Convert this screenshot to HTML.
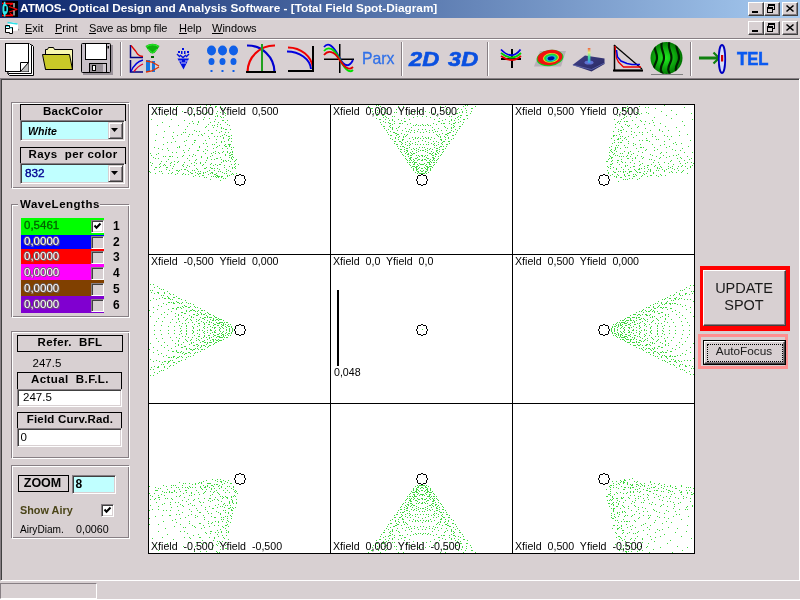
<!DOCTYPE html>
<html><head><meta charset="utf-8"><style>
*{box-sizing:border-box}
body{will-change:transform;margin:0;width:800px;height:600px;overflow:hidden;background:#D8D0D2;position:relative;font-family:"Liberation Sans",sans-serif;font-size:11px;color:#000}
.a{position:absolute}
.t{position:absolute;white-space:pre;line-height:1}
.wb{position:absolute;width:16px;height:14px;background:#D8D0D2;border-top:1px solid #fff;border-left:1px solid #fff;border-right:1px solid #404040;border-bottom:1px solid #404040;box-shadow:inset -1px -1px 0 #877F84}
.etch{position:absolute;border:1px solid #877F84;box-shadow:inset 1px 1px 0 #fff,1px 1px 0 #fff}
.lbl{position:absolute;border:1px solid #000;font-weight:bold;text-align:center}
.sunk{position:absolute;border-top:1px solid #877F84;border-left:1px solid #877F84;border-right:1px solid #fff;border-bottom:1px solid #fff;box-shadow:inset 1px 1px 0 #404040,inset -1px -1px 0 #D8D0D2}
.raise{position:absolute;background:#D8D0D2;border-top:1px solid #fff;border-left:1px solid #fff;border-right:1px solid #404040;border-bottom:1px solid #404040;box-shadow:inset -1px -1px 0 #877F84}
.chk{position:absolute;width:13px;height:13px;border-top:1px solid #877F84;border-left:1px solid #877F84;border-right:1px solid #fff;border-bottom:1px solid #fff;box-shadow:inset 1px 1px 0 #404040,inset -1px -1px 0 #D8D0D2;background:#D8D0D2}
.sep{position:absolute;width:2px;border-left:1px solid #877F84;border-right:1px solid #fff}
</style></head><body>
<!-- title bar -->
<div class="a" style="left:0;top:0;width:800px;height:18px;background:linear-gradient(to right,#0A246A,#A6CAF0)"></div>
<svg class="a" style="left:0;top:0" width="20" height="18" viewBox="0 0 20 18">
<rect x="2" y="1" width="16" height="16" fill="#000"/>
<path d="M2 3.5H13M2 15.5H13" stroke="#F00" stroke-width="1.3"/>
<path d="M9 6.5L17.5 9.5M9 12L17 9.5M10 5L13 3.5M10 13.5L13 15.5" stroke="#F00" stroke-width="1.3"/>
<path d="M14 3V7.5M14 10.5V15.5" stroke="#A8A8A8" stroke-width="1.6"/>
<path d="M3.8 1.8h1.6v2c1.8 1 2.6 2.8 2.6 5.4s-.8 4.4-2.6 5.4v2H3.8v-2C2.6 13.6 2.4 12 2.4 9.2s.2-4.4 1.4-5.4z" fill="#2EE8F0"/>
<rect x="4.4" y="6.2" width="2" height="5" fill="#000"/>
</svg>
<div class="t" style="left:20px;top:3px;font-weight:bold;font-size:11.8px;color:#fff">ATMOS- Optical Design and Analysis Software - [Total Field Spot-Diagram]</div>
<div class="wb" style="left:748px;top:2px"></div>
<div class="wb" style="left:764px;top:2px"></div>
<div class="wb" style="left:782px;top:2px"></div>
<div class="wb" style="left:748px;top:21px"></div>
<div class="wb" style="left:764px;top:21px"></div>
<div class="wb" style="left:782px;top:21px"></div>
<svg class="a" style="left:746px;top:0px" width="54" height="18" viewBox="0 0 54 18">
<rect x="6" y="11" width="6" height="2" fill="#000"/>
<g fill="#000" shape-rendering="crispEdges"><rect x="22" y="4" width="7" height="2"/><rect x="28" y="6" width="1" height="4"/><rect x="27" y="9" width="1" height="1"/><rect x="22" y="6" width="1" height="1"/>
<rect x="21" y="7" width="6" height="2"/><rect x="21" y="9" width="1" height="4"/><rect x="26" y="9" width="1" height="4"/><rect x="21" y="12" width="6" height="1"/></g>
<path d="M40.5 5.5L47.5 11.5M47.5 5.5L40.5 11.5" stroke="#000" stroke-width="1.6"/>
</svg>
<svg class="a" style="left:746px;top:19px" width="54" height="18" viewBox="0 0 54 18">
<rect x="6" y="11" width="6" height="2" fill="#000"/>
<g fill="#000" shape-rendering="crispEdges"><rect x="22" y="4" width="7" height="2"/><rect x="28" y="6" width="1" height="4"/><rect x="27" y="9" width="1" height="1"/><rect x="22" y="6" width="1" height="1"/>
<rect x="21" y="7" width="6" height="2"/><rect x="21" y="9" width="1" height="4"/><rect x="26" y="9" width="1" height="4"/><rect x="21" y="12" width="6" height="1"/></g>
<path d="M40.5 5.5L47.5 11.5M47.5 5.5L40.5 11.5" stroke="#000" stroke-width="1.6"/>
</svg>
<!-- menu -->
<svg class="a" style="left:0;top:18px" width="22" height="20" viewBox="0 0 22 20">
<path d="M8 6L13 4L18 6V12.5L13 13L8 12z" fill="#fff"/>
<path d="M7.5 4.5L17.5 6" stroke="#30E0E8" stroke-width="1.3"/>
<path d="M18 10.5L19.5 12L18 12.5z" fill="#808080"/>
<path d="M5.5 7.5H9.5V9.5H12.5V15.5H9.5V14.5H5.5z" fill="#fff" stroke="#000" stroke-width="1"/>
<path d="M6 8.5H9M9.5 10H12" stroke="#30E0E8" stroke-width="1"/>
<path d="M5.5 10.5H9.5V9.5" fill="none" stroke="#000" stroke-width="1"/>
</svg>
<div class="t" style="left:25px;top:22.5px;font-size:11px">Exit</div>
<div class="t" style="left:55px;top:22.5px;font-size:11px">Print</div>
<div class="t" style="left:89px;top:22.5px;font-size:11px;letter-spacing:-0.2px">Save as bmp file</div>
<div class="t" style="left:179px;top:22.5px;font-size:11px">Help</div>
<div class="t" style="left:212px;top:22.5px;font-size:11px">Windows</div>
<div class="a" style="left:25px;top:33px;width:7px;height:1px;background:#000"></div>
<div class="a" style="left:55px;top:33px;width:7px;height:1px;background:#000"></div>
<div class="a" style="left:89px;top:33px;width:7px;height:1px;background:#000"></div>
<div class="a" style="left:179px;top:33px;width:8px;height:1px;background:#000"></div>
<div class="a" style="left:212px;top:33px;width:11px;height:1px;background:#000"></div>
<div class="a" style="left:0;top:38px;width:800px;height:1px;background:#877F84"></div>
<div class="a" style="left:0;top:39px;width:800px;height:1px;background:#fff"></div>
<svg class="a" style="left:0;top:38px" width="800" height="40" viewBox="0 38 800 40">
<rect x="120" y="42" width="1" height="34" fill="#877F84"/><rect x="121" y="42" width="1" height="34" fill="#fff"/>
<rect x="401" y="42" width="1" height="34" fill="#877F84"/><rect x="402" y="42" width="1" height="34" fill="#fff"/>
<rect x="487" y="42" width="1" height="34" fill="#877F84"/><rect x="488" y="42" width="1" height="34" fill="#fff"/>
<rect x="690" y="42" width="1" height="34" fill="#877F84"/><rect x="691" y="42" width="1" height="34" fill="#fff"/>
<path d="M7.5 72.5V73.5L9.5 75.5H33.5V46.5L31.5 44.5" fill="#fff" stroke="#000"/>
<path d="M7.5 71.5L8.5 73.5H31.5V45.5L29.5 43.5" fill="#fff" stroke="#000"/>
<rect x="5.5" y="43.5" width="23" height="28" fill="#fff" stroke="#000"/>
<path d="M28.5 62.5V71.5H20.5z" fill="#C0C0C0"/>
<path d="M20.5 71.5V62.5H28.5M28.5 62.5L20.5 71.5" fill="none" stroke="#000"/>
<path d="M45.5 54.5V49.5H47.5L48.5 47.5H53.5L54.5 49.5H72.5V69.5H45.5z" fill="#F8F8B0" stroke="#000"/>
<path d="M42.5 54.5H69.5L72.5 69.5H45.5z" fill="#CACA28" stroke="#000"/>
<rect x="83" y="45" width="30" height="30" fill="#9A929A"/>
<rect x="81.5" y="43.5" width="29" height="29" fill="#C8C0C8" stroke="#000" rx="1"/>
<rect x="85.5" y="43.5" width="21" height="16" fill="#fff" stroke="#000"/>
<rect x="107.5" y="46" width="1.5" height="2.5" fill="#000"/>
<rect x="89.5" y="63.5" width="17" height="9" fill="#9A929A" stroke="#000"/>
<rect x="92.5" y="65.5" width="3" height="5" fill="#fff" stroke="#000"/>
<rect x="103" y="64" width="3" height="8" fill="#D0C8D0"/>
<path d="M130.5 45V57.5H143" fill="none" stroke="#000080" stroke-width="1.5"/>
<path d="M131 45.5L135.5 51L137.5 54L140 56L143 56.5" fill="none" stroke="#E00000" stroke-width="1.3"/>
<path d="M130.5 60V72H143" fill="none" stroke="#000080" stroke-width="1.5"/>
<path d="M131 71.5Q135 62 143 60" fill="none" stroke="#0000E0" stroke-width="1.3"/>
<path d="M134 71.5Q138 66 143 64" fill="none" stroke="#E00030" stroke-width="1.3"/>
<path d="M145.5 46Q152.5 41.5 159.5 46L157 50Q152.5 57 148 50z" fill="#10B010"/>
<path d="M146.5 46.5Q152.5 43 158.5 46.5M148 49L152.5 53L157 49" fill="none" stroke="#30FF30" stroke-width="1"/>
<rect x="151" y="56" width="3" height="2" fill="#006000"/>
<rect x="146" y="60" width="4" height="12" fill="#1878E0"/>
<rect x="152" y="61" width="3" height="11" fill="#1878E0"/>
<path d="M146 61L152 62L159 66M146 72L152 71L159 67" fill="none" stroke="#E03000" stroke-width="1.3"/>
<path d="M177.5 58.5H189L183.5 69.5z" fill="#0010E0"/>
<g fill="#0010E0"><rect x="182" y="48" width="2" height="2"/><rect x="178" y="51" width="2" height="2"/><rect x="181" y="51" width="1.5" height="3"/><rect x="184" y="51" width="1.5" height="3"/><rect x="187" y="51" width="2" height="2"/>
<path d="M177 54L180 57M186 57L189 54M180 55L183 57.5L186 55" stroke="#0010E0" stroke-width="1.4" fill="none"/></g>
<path d="M179 61H182M185 61H188M181 63H186" stroke="#C8C8F8" stroke-width="1"/>
<g fill="#1060E8">
<ellipse cx="211.5" cy="50.5" rx="4.5" ry="5"/><ellipse cx="211.5" cy="61.5" rx="3" ry="3.5"/><rect x="210.5" y="70" width="2" height="2"/>
<ellipse cx="222.5" cy="50.5" rx="4.5" ry="5"/><ellipse cx="222.5" cy="61.5" rx="3" ry="3.5"/><rect x="221.5" y="70" width="2" height="2"/>
<ellipse cx="233.5" cy="50.5" rx="4.5" ry="5"/><ellipse cx="233.5" cy="61.5" rx="3" ry="3.5"/><rect x="232.5" y="70" width="2" height="2"/>
</g>
<path d="M247 45.5A27 27 0 0 1 274.5 72" fill="none" stroke="#0000D0" stroke-width="2.2"/>
<path d="M275 45.5A27 27 0 0 0 247.5 72" fill="none" stroke="#F00000" stroke-width="2.2"/>
<rect x="261" y="44" width="2" height="28" fill="#20A020"/>
<rect x="246" y="71" width="30" height="2" fill="#000"/>
<path d="M288 47.5A25 23 0 0 1 313 68" fill="none" stroke="#F00000" stroke-width="2"/>
<path d="M287 51.5A24 19 0 0 1 311 69" fill="none" stroke="#0000E0" stroke-width="2"/>
<rect x="312" y="46" width="2" height="26" fill="#000"/>
<rect x="288" y="70" width="26" height="2" fill="#000"/>
<rect x="339" y="44" width="1.5" height="29" fill="#000"/>
<rect x="324" y="58.5" width="30" height="1.5" fill="#000"/>
<path d="M324 47C328 42 333 45 339 57S350 66 353 60" fill="none" stroke="#0000E0" stroke-width="1.8"/>
<path d="M324 51C328 46 334 48 339 58S349 74 353 70" fill="none" stroke="#00E000" stroke-width="1.8"/>
<path d="M324 55C328 50 334 51 339 59S349 71 353 67" fill="none" stroke="#E00000" stroke-width="1.8"/>
<rect x="511" y="49" width="2" height="19" fill="#000"/>
<rect x="501" y="58" width="20" height="2" fill="#000"/>
<path d="M501 56Q512 64 521 56" fill="none" stroke="#E00000" stroke-width="1.8"/>
<path d="M501 53Q512 62 521 53" fill="none" stroke="#00D000" stroke-width="1.8"/>
<path d="M501 49.5Q512 61 520.5 49.5" fill="none" stroke="#0000E0" stroke-width="1.8"/>
<path d="M534 66.5H561L566 51H540z" fill="#B8B0B8"/>
<ellipse cx="550" cy="58" rx="13.5" ry="8" fill="#10D020" transform="rotate(-8 550 58)"/>
<ellipse cx="550" cy="57.5" rx="12.5" ry="7.5" fill="#F01010" transform="rotate(-8 550 58)"/>
<ellipse cx="551" cy="58" rx="8" ry="4.8" fill="#F0E020" transform="rotate(-8 550 58)"/>
<ellipse cx="551" cy="58" rx="7" ry="4.2" fill="#20D040" transform="rotate(-8 550 58)"/>
<ellipse cx="551" cy="58.5" rx="5" ry="3" fill="#10C0E0" transform="rotate(-8 550 58)"/>
<ellipse cx="551" cy="58.5" rx="3.5" ry="2" fill="#0010A0" transform="rotate(-8 550 58)"/>
<defs><linearGradient id="spk" x1="0" y1="0" x2="0" y2="1"><stop offset="0" stop-color="#F06040"/><stop offset=".3" stop-color="#E0F080"/><stop offset=".6" stop-color="#40E0A0"/><stop offset="1" stop-color="#4090F0"/></linearGradient>
<linearGradient id="bas" x1="0" y1="0" x2="1" y2="1"><stop offset="0" stop-color="#404088"/><stop offset="1" stop-color="#282860"/></linearGradient></defs>
<path d="M572.5 65L585 55.5L604.5 58.5V64L591.5 71.5z" fill="url(#bas)"/>
<path d="M573 65L591.5 69.5L604.5 63" fill="none" stroke="#6068B0" stroke-width="0.8"/>
<ellipse cx="589" cy="62.5" rx="4.5" ry="2" fill="#6070D0"/>
<rect x="587.8" y="48" width="2.6" height="15" fill="url(#spk)"/>

<path d="M614.5 45V70.5H642.5" fill="none" stroke="#000" stroke-width="1.5"/>
<rect x="613" y="69.5" width="30" height="2" fill="#000"/>
<path d="M614 45L642 69" stroke="#000" stroke-width="1.2"/>
<path d="M615 46L616.5 58L618.5 62L623.5 67H641" fill="none" stroke="#F00000" stroke-width="1.3"/>
<path d="M616.5 50L617.5 57L621 61L627 63.5L632 64.5H640" fill="none" stroke="#0000E0" stroke-width="1.5"/>
<defs><clipPath id="sph"><circle cx="666.5" cy="58" r="16"/></clipPath>
<radialGradient id="sg" cx="0.45" cy="0.5" r="0.55"><stop offset="0" stop-color="#20F020"/><stop offset="1" stop-color="#007000"/></radialGradient></defs>
<circle cx="666.5" cy="58" r="16" fill="url(#sg)"/>
<g clip-path="url(#sph)" fill="none" stroke="#002000" stroke-width="2.2">
<path d="M655 42C652 50 660 54 656 62S654 72 657 76"/>
<path d="M662 42C659 50 667 54 663 62S661 72 664 76"/>
<path d="M669.5 42C666.5 50 674.5 54 670.5 62S668.5 72 671.5 76"/>
<path d="M677 42C674 50 682 54 678 62S676 72 679 76"/>
</g>
<rect x="651" y="74" width="32" height="1" fill="#808080"/>
<rect x="699" y="56.5" width="20" height="3" fill="#108010"/>
<path d="M713.5 52.5L719 58L713.5 63.5" fill="none" stroke="#108010" stroke-width="2.2"/>
<ellipse cx="722" cy="59" rx="3.2" ry="14" fill="#D8E0F8" stroke="#0000C0" stroke-width="1.8"/>
<rect x="721" y="55" width="2.2" height="6.5" fill="#D00000"/>
</svg>
<div class="t" style="left:361.5px;top:49.91px;font-size:17px;color:#3070E8;-webkit-text-stroke:0.3px #3070E8;transform:scaleX(.93);transform-origin:left">Parx</div>
<div class="t" style="left:409px;top:48.67px;font-size:20px;color:#0A50E0;font-weight:bold;font-style:italic;-webkit-text-stroke:0.6px #0A50E0;transform:scaleX(1.18);transform-origin:left">2D</div>
<div class="t" style="left:448px;top:48.67px;font-size:20px;color:#0A50E0;font-weight:bold;font-style:italic;-webkit-text-stroke:0.6px #0A50E0;transform:scaleX(1.18);transform-origin:left">3D</div>
<div class="t" style="left:737px;top:48.82px;font-size:19px;color:#0A5AF0;font-weight:bold;-webkit-text-stroke:0.6px #0A5AF0;transform:scaleX(.88);transform-origin:left">TEL</div>
<!-- MDI client border -->
<div class="a" style="left:0;top:78px;width:800px;height:503px;border-top:1px solid #877F84;border-left:1px solid #877F84;border-right:1px solid #fff;border-bottom:1px solid #fff;box-shadow:inset 1px 1px 0 #404040"></div>
<!-- status bar -->
<div class="a" style="left:0;top:583px;width:97px;height:16px;border-top:1px solid #877F84;border-left:1px solid #877F84;border-right:1px solid #fff;border-bottom:1px solid #fff"></div>
<div class="a" style="left:0;top:599px;width:800px;height:1px;background:#fff"></div>
<div class="a" style="left:11px;top:102px;width:118px;height:86px;border:1px solid #877F84"></div>
<div class="a" style="left:12px;top:103px;width:118px;height:86px;border:1px solid #fff"></div>
<div class="a" style="left:11px;top:102px;width:118px;height:86px;border-top:1px solid #877F84;border-left:1px solid #877F84"></div>
<div class="a" style="left:20px;top:104px;width:106px;height:17px;border:1px solid #000"></div>
<div class="t" style="left:-27.0px;width:200px;text-align:center;top:106.27px;font-size:11.5px;font-weight:bold;letter-spacing:0.3px">BackColor</div>
<div class="a" style="left:20px;top:120px;width:105px;height:21px;background:#C0FFFF;border-top:1px solid #877F84;border-left:1px solid #877F84;border-right:1px solid #fff;border-bottom:1px solid #fff;box-shadow:inset 1px 1px 0 #404040,inset -1px -1px 0 #D8D0D2"></div>
<div class="a" style="left:108px;top:122px;width:15px;height:17px;background:#D8D0D2;border-top:1px solid #D8D0D2;border-left:1px solid #D8D0D2;border-right:1px solid #404040;border-bottom:1px solid #404040;box-shadow:inset 1px 1px 0 #fff,inset -1px -1px 0 #877F84"></div>
<svg class="a" style="left:111px;top:128px" width="7" height="4"><path d="M0 0h7l-3.5 4z" fill="#000"/></svg>
<div class="t" style="left:28px;top:126.27px;font-size:11.5px;font-weight:bold;font-style:italic;transform:scaleX(.92);transform-origin:left">White</div>
<div class="a" style="left:20px;top:147px;width:106px;height:17px;border:1px solid #000"></div>
<div class="t" style="left:-27.0px;width:200px;text-align:center;top:149.27px;font-size:11.5px;font-weight:bold;letter-spacing:0.4px">Rays  per color</div>
<div class="a" style="left:20px;top:163px;width:105px;height:21px;background:#C0FFFF;border-top:1px solid #877F84;border-left:1px solid #877F84;border-right:1px solid #fff;border-bottom:1px solid #fff;box-shadow:inset 1px 1px 0 #404040,inset -1px -1px 0 #D8D0D2"></div>
<div class="a" style="left:108px;top:165px;width:15px;height:17px;background:#D8D0D2;border-top:1px solid #D8D0D2;border-left:1px solid #D8D0D2;border-right:1px solid #404040;border-bottom:1px solid #404040;box-shadow:inset 1px 1px 0 #fff,inset -1px -1px 0 #877F84"></div>
<svg class="a" style="left:111px;top:171px" width="7" height="4"><path d="M0 0h7l-3.5 4z" fill="#000"/></svg>
<div class="t" style="left:25px;top:168.01px;font-size:11.8px;color:#000090;-webkit-text-stroke:0.35px #000090">832</div>
<div class="a" style="left:11px;top:204px;width:118px;height:113px;border:1px solid #877F84"></div>
<div class="a" style="left:12px;top:205px;width:118px;height:113px;border:1px solid #fff"></div>
<div class="a" style="left:11px;top:204px;width:118px;height:113px;border-top:1px solid #877F84;border-left:1px solid #877F84"></div>
<div class="a" style="left:18px;top:203px;width:82px;height:4px;background:#D8D0D2"></div>
<div class="t" style="left:20px;top:198.77px;font-size:11.5px;font-weight:bold;letter-spacing:0.5px">WaveLengths</div>
<div class="a" style="left:21px;top:218px;width:83px;height:17px;background:#00FF00"></div>
<div class="t" style="left:24px;top:219.77px;font-size:11.5px;color:#006000;-webkit-text-stroke:0.3px #006000">0,5461</div>
<div class="a" style="left:91px;top:220px;width:13px;height:13px;background:#fff;border-top:1px solid #877F84;border-left:1px solid #877F84;border-right:1px solid #fff;border-bottom:1px solid #fff;box-shadow:inset 1px 1px 0 #404040,inset -1px -1px 0 #D8D0D2"></div>
<div class="t" style="left:113px;top:220.34px;font-size:12px;font-weight:bold;">1</div>
<div class="a" style="left:21px;top:235px;width:83px;height:14px;background:#0000FF"></div>
<div class="t" style="left:24px;top:235.77px;font-size:11.5px;color:#fff;text-shadow:1px 1px 0 #6a6468,-1px 0 0 #6a6468,0 -1px 0 #6a6468">0,0000</div>
<div class="a" style="left:91px;top:236px;width:13px;height:13px;background:#D8D0D2;border-top:1px solid #877F84;border-left:1px solid #877F84;border-right:1px solid #fff;border-bottom:1px solid #fff;box-shadow:inset 1px 1px 0 #404040,inset -1px -1px 0 #D8D0D2"></div>
<div class="t" style="left:113px;top:236.34px;font-size:12px;font-weight:bold;">2</div>
<div class="a" style="left:21px;top:249px;width:83px;height:15px;background:#FF0000"></div>
<div class="t" style="left:24px;top:250.77px;font-size:11.5px;color:#fff;text-shadow:1px 1px 0 #6a6468,-1px 0 0 #6a6468,0 -1px 0 #6a6468">0,0000</div>
<div class="a" style="left:91px;top:251px;width:13px;height:13px;background:#D8D0D2;border-top:1px solid #877F84;border-left:1px solid #877F84;border-right:1px solid #fff;border-bottom:1px solid #fff;box-shadow:inset 1px 1px 0 #404040,inset -1px -1px 0 #D8D0D2"></div>
<div class="t" style="left:113px;top:251.34px;font-size:12px;font-weight:bold;">3</div>
<div class="a" style="left:21px;top:264px;width:83px;height:16px;background:#FF00FF"></div>
<div class="t" style="left:24px;top:266.77px;font-size:11.5px;color:#fff;text-shadow:1px 1px 0 #6a6468,-1px 0 0 #6a6468,0 -1px 0 #6a6468">0,0000</div>
<div class="a" style="left:91px;top:267px;width:13px;height:13px;background:#D8D0D2;border-top:1px solid #877F84;border-left:1px solid #877F84;border-right:1px solid #fff;border-bottom:1px solid #fff;box-shadow:inset 1px 1px 0 #404040,inset -1px -1px 0 #D8D0D2"></div>
<div class="t" style="left:113px;top:267.34px;font-size:12px;font-weight:bold;">4</div>
<div class="a" style="left:21px;top:280px;width:83px;height:16px;background:#804000"></div>
<div class="t" style="left:24px;top:282.77px;font-size:11.5px;color:#fff;text-shadow:1px 1px 0 #6a6468,-1px 0 0 #6a6468,0 -1px 0 #6a6468">0,0000</div>
<div class="a" style="left:91px;top:283px;width:13px;height:13px;background:#D8D0D2;border-top:1px solid #877F84;border-left:1px solid #877F84;border-right:1px solid #fff;border-bottom:1px solid #fff;box-shadow:inset 1px 1px 0 #404040,inset -1px -1px 0 #D8D0D2"></div>
<div class="t" style="left:113px;top:283.34px;font-size:12px;font-weight:bold;">5</div>
<div class="a" style="left:21px;top:296px;width:83px;height:17px;background:#8000D0"></div>
<div class="t" style="left:24px;top:298.77px;font-size:11.5px;color:#fff;text-shadow:1px 1px 0 #6a6468,-1px 0 0 #6a6468,0 -1px 0 #6a6468">0,0000</div>
<div class="a" style="left:91px;top:299px;width:13px;height:13px;background:#D8D0D2;border-top:1px solid #877F84;border-left:1px solid #877F84;border-right:1px solid #fff;border-bottom:1px solid #fff;box-shadow:inset 1px 1px 0 #404040,inset -1px -1px 0 #D8D0D2"></div>
<div class="t" style="left:113px;top:299.34px;font-size:12px;font-weight:bold;">6</div>
<svg class="a" style="left:93px;top:222px" width="9" height="9"><path d="M1.5 3.5l2 2.2 4-4.2" fill="none" stroke="#000" stroke-width="2"/></svg>
<div class="a" style="left:11px;top:331px;width:118px;height:127px;border:1px solid #877F84"></div>
<div class="a" style="left:12px;top:332px;width:118px;height:127px;border:1px solid #fff"></div>
<div class="a" style="left:11px;top:331px;width:118px;height:127px;border-top:1px solid #877F84;border-left:1px solid #877F84"></div>
<div class="a" style="left:17px;top:335px;width:106px;height:17px;border:1px solid #000"></div>
<div class="t" style="left:-30.0px;width:200px;text-align:center;top:336.77px;font-size:11.5px;font-weight:bold;letter-spacing:0.4px">Refer.  BFL</div>
<div class="t" style="left:32.5px;top:357.77px;font-size:11.5px;">247.5</div>
<div class="a" style="left:17px;top:372px;width:105px;height:18px;border:1px solid #000"></div>
<div class="t" style="left:-30.0px;width:200px;text-align:center;top:374.27px;font-size:11.5px;font-weight:bold;letter-spacing:0.4px">Actual  B.F.L.</div>
<div class="a" style="left:17px;top:389px;width:105px;height:18px;background:#fff;border-top:1px solid #877F84;border-left:1px solid #877F84;border-right:1px solid #fff;border-bottom:1px solid #fff;box-shadow:inset 1px 1px 0 #404040,inset -1px -1px 0 #D8D0D2"></div>
<div class="t" style="left:23px;top:391.77px;font-size:11.5px;">247.5</div>
<div class="a" style="left:17px;top:412px;width:105px;height:18px;border:1px solid #000"></div>
<div class="t" style="left:-30.0px;width:200px;text-align:center;top:413.77px;font-size:11.5px;font-weight:bold;letter-spacing:0.2px">Field Curv.Rad.</div>
<div class="a" style="left:17px;top:428px;width:105px;height:19px;background:#fff;border-top:1px solid #877F84;border-left:1px solid #877F84;border-right:1px solid #fff;border-bottom:1px solid #fff;box-shadow:inset 1px 1px 0 #404040,inset -1px -1px 0 #D8D0D2"></div>
<div class="t" style="left:20.5px;top:432.27px;font-size:11.5px;">0</div>
<div class="a" style="left:11px;top:465px;width:118px;height:73px;border:1px solid #877F84"></div>
<div class="a" style="left:12px;top:466px;width:118px;height:73px;border:1px solid #fff"></div>
<div class="a" style="left:11px;top:465px;width:118px;height:73px;border-top:1px solid #877F84;border-left:1px solid #877F84"></div>
<div class="a" style="left:18px;top:475px;width:51px;height:17px;border:1px solid #000"></div>
<div class="t" style="left:-57.5px;width:200px;text-align:center;top:477.42px;font-size:12.5px;font-weight:bold;">ZOOM</div>
<div class="a" style="left:72px;top:475px;width:44px;height:19px;background:#C0FFFF;border-top:1px solid #877F84;border-left:1px solid #877F84;border-right:1px solid #fff;border-bottom:1px solid #fff;box-shadow:inset 1px 1px 0 #404040,inset -1px -1px 0 #D8D0D2"></div>
<div class="t" style="left:75.5px;top:478.34px;font-size:12px;font-weight:bold;">8</div>
<div class="t" style="left:20px;top:505.01px;font-size:11.8px;font-weight:bold;color:#4A4418;transform:scaleX(.92);transform-origin:left">Show Airy</div>
<div class="a" style="left:101px;top:504px;width:13px;height:13px;background:#fff;border-top:1px solid #877F84;border-left:1px solid #877F84;border-right:1px solid #fff;border-bottom:1px solid #fff;box-shadow:inset 1px 1px 0 #404040,inset -1px -1px 0 #D8D0D2"></div>
<svg class="a" style="left:103px;top:506px" width="9" height="9"><path d="M1.5 3.5l2 2.2 4-4.2" fill="none" stroke="#000" stroke-width="2"/></svg>
<div class="t" style="left:20px;top:524.27px;font-size:11.5px;transform:scaleX(.88);transform-origin:left">AiryDiam.</div>
<div class="t" style="left:76px;top:524.27px;font-size:11.5px;transform:scaleX(.93);transform-origin:left">0,0060</div>
<svg class="a" style="left:148px;top:104px" width="547" height="450" viewBox="0 0 547 450" shape-rendering="crispEdges"><rect x="0" y="0" width="547" height="450" fill="#fff"/><path fill="#40D840" d="M67 226h1v1h-1zM67 228h1v1h-1zM69 230h1v1h-1zM71 232h1v1h-1zM74 233h1v1h-1zM76 233h1v1h-1zM79 233h1v1h-1zM82 231h1v1h-1zM83 229h1v1h-1zM84 227h1v1h-1zM84 225h1v1h-1zM83 223h1v1h-1zM81 222h1v1h-1zM79 221h1v1h-1zM77 220h1v1h-1zM75 221h1v1h-1zM73 222h1v1h-1zM72 224h1v1h-1zM71 226h1v1h-1zM72 227h1v1h-1zM73 229h1v1h-1zM75 230h1v1h-1zM77 231h1v1h-1zM79 230h1v1h-1zM81 229h1v1h-1zM83 228h1v1h-1zM84 226h1v1h-1zM84 224h1v1h-1zM83 222h1v1h-1zM82 220h1v1h-1zM79 218h1v1h-1zM76 218h1v1h-1zM74 218h1v1h-1zM71 219h1v1h-1zM69 221h1v1h-1zM67 223h1v1h-1zM59 226h1v1h-1zM59 228h1v1h-1zM60 231h1v1h-1zM63 233h1v1h-1zM65 235h1v1h-1zM69 236h1v1h-1zM72 236h1v1h-1zM75 235h1v1h-1zM78 233h1v1h-1zM80 231h1v1h-1zM81 226h1v1h-1zM81 224h1v1h-1zM80 222h1v1h-1zM75 219h1v1h-1zM72 218h1v1h-1zM69 219h1v1h-1zM67 220h1v1h-1zM65 221h1v1h-1zM64 223h1v1h-1zM63 226h1v1h-1zM64 228h1v1h-1zM65 230h1v1h-1zM67 231h1v1h-1zM69 232h1v1h-1zM72 233h1v1h-1zM75 232h1v1h-1zM80 229h1v1h-1zM81 227h1v1h-1zM81 225h1v1h-1zM80 220h1v1h-1zM78 218h1v1h-1zM75 216h1v1h-1zM72 215h1v1h-1zM69 215h1v1h-1zM65 216h1v1h-1zM63 218h1v1h-1zM60 220h1v1h-1zM59 223h1v1h-1zM49 226h1v1h-1zM49 229h1v1h-1zM51 232h1v1h-1zM53 234h1v1h-1zM56 236h1v1h-1zM59 238h1v1h-1zM63 238h1v1h-1zM67 238h1v1h-1zM70 237h1v1h-1zM73 236h1v1h-1zM78 228h1v1h-1zM78 225h1v1h-1zM77 222h1v1h-1zM75 220h1v1h-1zM73 218h1v1h-1zM70 216h1v1h-1zM67 216h1v1h-1zM64 216h1v1h-1zM61 217h1v1h-1zM58 218h1v1h-1zM56 220h1v1h-1zM55 223h1v1h-1zM54 226h1v1h-1zM55 228h1v1h-1zM56 231h1v1h-1zM58 233h1v1h-1zM61 234h1v1h-1zM64 235h1v1h-1zM67 235h1v1h-1zM70 235h1v1h-1zM73 233h1v1h-1zM75 231h1v1h-1zM77 229h1v1h-1zM78 226h1v1h-1zM78 223h1v1h-1zM73 215h1v1h-1zM70 214h1v1h-1zM67 213h1v1h-1zM63 213h1v1h-1zM59 213h1v1h-1zM56 215h1v1h-1zM53 217h1v1h-1zM51 219h1v1h-1zM49 222h1v1h-1zM38 226h1v1h-1zM38 229h1v1h-1zM40 233h1v1h-1zM42 236h1v1h-1zM45 238h1v1h-1zM49 240h1v1h-1zM53 241h1v1h-1zM57 242h1v1h-1zM61 241h1v1h-1zM65 240h1v1h-1zM68 238h1v1h-1zM71 236h1v1h-1zM74 230h1v1h-1zM75 227h1v1h-1zM74 223h1v1h-1zM73 220h1v1h-1zM71 218h1v1h-1zM68 215h1v1h-1zM65 214h1v1h-1zM61 213h1v1h-1zM57 213h1v1h-1zM54 214h1v1h-1zM51 215h1v1h-1zM48 217h1v1h-1zM46 220h1v1h-1zM45 223h1v1h-1zM44 226h1v1h-1zM45 228h1v1h-1zM46 231h1v1h-1zM48 234h1v1h-1zM51 236h1v1h-1zM54 237h1v1h-1zM57 238h1v1h-1zM61 238h1v1h-1zM65 237h1v1h-1zM68 236h1v1h-1zM71 233h1v1h-1zM73 231h1v1h-1zM74 228h1v1h-1zM75 224h1v1h-1zM74 221h1v1h-1zM71 215h1v1h-1zM68 213h1v1h-1zM65 211h1v1h-1zM61 210h1v1h-1zM57 209h1v1h-1zM53 210h1v1h-1zM49 211h1v1h-1zM45 213h1v1h-1zM42 215h1v1h-1zM40 218h1v1h-1zM38 222h1v1h-1zM26 226h1v1h-1zM26 229h1v1h-1zM28 233h1v1h-1zM30 237h1v1h-1zM33 240h1v1h-1zM37 242h1v1h-1zM41 244h1v1h-1zM45 245h1v1h-1zM50 245h1v1h-1zM54 245h1v1h-1zM59 243h1v1h-1zM62 241h1v1h-1zM66 239h1v1h-1zM70 232h1v1h-1zM71 229h1v1h-1zM71 225h1v1h-1zM70 221h1v1h-1zM68 218h1v1h-1zM65 215h1v1h-1zM62 213h1v1h-1zM58 211h1v1h-1zM55 210h1v1h-1zM50 210h1v1h-1zM46 210h1v1h-1zM43 212h1v1h-1zM39 214h1v1h-1zM37 216h1v1h-1zM34 219h1v1h-1zM33 222h1v1h-1zM33 226h1v1h-1zM33 229h1v1h-1zM34 232h1v1h-1zM37 235h1v1h-1zM39 237h1v1h-1zM43 239h1v1h-1zM46 241h1v1h-1zM50 241h1v1h-1zM55 241h1v1h-1zM58 240h1v1h-1zM62 238h1v1h-1zM65 236h1v1h-1zM68 233h1v1h-1zM70 230h1v1h-1zM71 223h1v1h-1zM70 219h1v1h-1zM66 212h1v1h-1zM62 210h1v1h-1zM59 208h1v1h-1zM54 206h1v1h-1zM50 206h1v1h-1zM45 206h1v1h-1zM41 207h1v1h-1zM37 209h1v1h-1zM33 211h1v1h-1zM30 214h1v1h-1zM28 218h1v1h-1zM26 222h1v1h-1zM12 226h1v1h-1zM13 230h1v1h-1zM14 234h1v1h-1zM16 238h1v1h-1zM19 241h1v1h-1zM23 244h1v1h-1zM28 247h1v1h-1zM32 248h1v1h-1zM37 249h1v1h-1zM42 249h1v1h-1zM47 248h1v1h-1zM52 247h1v1h-1zM56 245h1v1h-1zM60 242h1v1h-1zM66 231h1v1h-1zM66 227h1v1h-1zM66 223h1v1h-1zM65 219h1v1h-1zM62 215h1v1h-1zM59 212h1v1h-1zM56 210h1v1h-1zM52 208h1v1h-1zM47 207h1v1h-1zM43 206h1v1h-1zM38 207h1v1h-1zM34 208h1v1h-1zM30 210h1v1h-1zM27 212h1v1h-1zM24 215h1v1h-1zM22 218h1v1h-1zM20 222h1v1h-1zM20 226h1v1h-1zM20 229h1v1h-1zM22 233h1v1h-1zM24 236h1v1h-1zM27 239h1v1h-1zM30 241h1v1h-1zM34 243h1v1h-1zM38 244h1v1h-1zM43 245h1v1h-1zM47 244h1v1h-1zM52 243h1v1h-1zM56 241h1v1h-1zM59 239h1v1h-1zM62 236h1v1h-1zM65 232h1v1h-1zM66 228h1v1h-1zM66 224h1v1h-1zM66 220h1v1h-1zM60 209h1v1h-1zM56 206h1v1h-1zM52 204h1v1h-1zM47 203h1v1h-1zM42 202h1v1h-1zM37 202h1v1h-1zM32 203h1v1h-1zM28 204h1v1h-1zM23 207h1v1h-1zM19 210h1v1h-1zM16 213h1v1h-1zM14 217h1v1h-1zM13 221h1v1h-1zM2 239h1v1h-1zM5 243h1v1h-1zM9 246h1v1h-1zM13 249h1v1h-1zM18 251h1v1h-1zM23 253h1v1h-1zM29 253h1v1h-1zM34 253h1v1h-1zM40 252h1v1h-1zM45 251h1v1h-1zM49 248h1v1h-1zM53 245h1v1h-1zM61 233h1v1h-1zM62 229h1v1h-1zM62 225h1v1h-1zM61 220h1v1h-1zM59 216h1v1h-1zM56 213h1v1h-1zM53 209h1v1h-1zM49 207h1v1h-1zM44 205h1v1h-1zM40 203h1v1h-1zM35 203h1v1h-1zM30 203h1v1h-1zM25 204h1v1h-1zM20 205h1v1h-1zM16 208h1v1h-1zM13 210h1v1h-1zM10 214h1v1h-1zM8 217h1v1h-1zM6 221h1v1h-1zM6 226h1v1h-1zM6 230h1v1h-1zM8 234h1v1h-1zM10 237h1v1h-1zM13 241h1v1h-1zM16 243h1v1h-1zM20 246h1v1h-1zM25 247h1v1h-1zM30 248h1v1h-1zM35 248h1v1h-1zM40 248h1v1h-1zM44 246h1v1h-1zM49 244h1v1h-1zM53 242h1v1h-1zM56 238h1v1h-1zM59 235h1v1h-1zM61 231h1v1h-1zM62 226h1v1h-1zM62 222h1v1h-1zM61 218h1v1h-1zM53 206h1v1h-1zM49 203h1v1h-1zM45 200h1v1h-1zM40 199h1v1h-1zM34 198h1v1h-1zM29 198h1v1h-1zM23 198h1v1h-1zM18 200h1v1h-1zM13 202h1v1h-1zM9 205h1v1h-1zM5 208h1v1h-1zM2 212h1v1h-1zM2 255h1v1h-1zM8 256h1v1h-1zM14 258h1v1h-1zM20 258h1v1h-1zM25 258h1v1h-1zM31 257h1v1h-1zM37 255h1v1h-1zM42 252h1v1h-1zM46 249h1v1h-1zM55 237h1v1h-1zM56 232h1v1h-1zM56 227h1v1h-1zM56 222h1v1h-1zM55 218h1v1h-1zM52 213h1v1h-1zM49 209h1v1h-1zM41 203h1v1h-1zM36 201h1v1h-1zM31 199h1v1h-1zM26 199h1v1h-1zM21 198h1v1h-1zM15 199h1v1h-1zM10 201h1v1h-1zM5 203h1v1h-1zM1 206h1v1h-1zM1 245h1v1h-1zM5 248h1v1h-1zM10 250h1v1h-1zM15 252h1v1h-1zM21 253h1v1h-1zM26 252h1v1h-1zM31 252h1v1h-1zM36 250h1v1h-1zM41 248h1v1h-1zM49 242h1v1h-1zM52 238h1v1h-1zM55 233h1v1h-1zM56 229h1v1h-1zM56 224h1v1h-1zM56 219h1v1h-1zM55 214h1v1h-1zM46 202h1v1h-1zM42 199h1v1h-1zM37 196h1v1h-1zM31 194h1v1h-1zM25 193h1v1h-1zM20 193h1v1h-1zM14 193h1v1h-1zM8 195h1v1h-1zM2 196h1v1h-1zM3 263h1v1h-1zM10 263h1v1h-1zM16 263h1v1h-1zM22 261h1v1h-1zM28 259h1v1h-1zM33 256h1v1h-1zM38 253h1v1h-1zM46 245h1v1h-1zM48 240h1v1h-1zM50 235h1v1h-1zM51 230h1v1h-1zM51 225h1v1h-1zM50 219h1v1h-1zM48 215h1v1h-1zM45 210h1v1h-1zM42 206h1v1h-1zM38 202h1v1h-1zM33 199h1v1h-1zM28 197h1v1h-1zM22 195h1v1h-1zM17 194h1v1h-1zM11 194h1v1h-1zM5 194h1v1h-1zM5 257h1v1h-1zM11 257h1v1h-1zM17 257h1v1h-1zM22 256h1v1h-1zM28 254h1v1h-1zM33 252h1v1h-1zM38 249h1v1h-1zM42 245h1v1h-1zM45 241h1v1h-1zM48 236h1v1h-1zM50 232h1v1h-1zM51 226h1v1h-1zM51 221h1v1h-1zM50 216h1v1h-1zM48 211h1v1h-1zM46 206h1v1h-1zM38 198h1v1h-1zM33 195h1v1h-1zM28 192h1v1h-1zM22 190h1v1h-1zM16 188h1v1h-1zM10 188h1v1h-1zM3 188h1v1h-1zM6 268h1v1h-1zM13 266h1v1h-1zM19 264h1v1h-1zM25 261h1v1h-1zM30 257h1v1h-1zM43 238h1v1h-1zM44 233h1v1h-1zM45 227h1v1h-1zM44 222h1v1h-1zM43 216h1v1h-1zM41 211h1v1h-1zM38 206h1v1h-1zM34 202h1v1h-1zM24 195h1v1h-1zM19 192h1v1h-1zM13 191h1v1h-1zM6 189h1v1h-1zM6 262h1v1h-1zM13 260h1v1h-1zM19 259h1v1h-1zM24 256h1v1h-1zM34 249h1v1h-1zM38 245h1v1h-1zM41 240h1v1h-1zM43 235h1v1h-1zM44 229h1v1h-1zM45 224h1v1h-1zM44 218h1v1h-1zM43 213h1v1h-1zM30 194h1v1h-1zM25 190h1v1h-1zM19 187h1v1h-1zM13 185h1v1h-1zM6 183h1v1h-1zM2 271h1v1h-1zM9 269h1v1h-1zM15 266h1v1h-1zM21 262h1v1h-1zM26 258h1v1h-1zM30 253h1v1h-1zM33 247h1v1h-1zM36 242h1v1h-1zM38 236h1v1h-1zM38 230h1v1h-1zM38 224h1v1h-1zM37 219h1v1h-1zM35 213h1v1h-1zM33 208h1v1h-1zM29 203h1v1h-1zM25 198h1v1h-1zM20 194h1v1h-1zM15 191h1v1h-1zM9 188h1v1h-1zM2 186h1v1h-1zM2 265h1v1h-1zM9 263h1v1h-1zM15 260h1v1h-1zM20 257h1v1h-1zM25 253h1v1h-1zM29 248h1v1h-1zM33 243h1v1h-1zM35 238h1v1h-1zM37 232h1v1h-1zM38 227h1v1h-1zM38 221h1v1h-1zM38 215h1v1h-1zM36 209h1v1h-1zM33 204h1v1h-1zM30 198h1v1h-1zM26 193h1v1h-1zM21 189h1v1h-1zM15 185h1v1h-1zM9 182h1v1h-1zM2 180h1v1h-1zM5 271h1v1h-1zM11 267h1v1h-1zM16 262h1v1h-1zM21 257h1v1h-1zM25 252h1v1h-1zM28 246h1v1h-1zM30 240h1v1h-1zM31 234h1v1h-1zM32 227h1v1h-1zM31 221h1v1h-1zM30 215h1v1h-1zM27 209h1v1h-1zM24 204h1v1h-1zM20 198h1v1h-1zM16 194h1v1h-1zM10 189h1v1h-1zM4 186h1v1h-1zM5 265h1v1h-1zM10 262h1v1h-1zM16 257h1v1h-1zM20 253h1v1h-1zM24 247h1v1h-1zM27 242h1v1h-1zM30 236h1v1h-1zM31 230h1v1h-1zM32 224h1v1h-1zM31 217h1v1h-1zM30 211h1v1h-1zM28 205h1v1h-1zM25 199h1v1h-1zM21 194h1v1h-1zM16 189h1v1h-1zM11 184h1v1h-1zM5 180h1v1h-1zM480 226h1v1h-1zM480 223h1v1h-1zM478 221h1v1h-1zM476 219h1v1h-1zM473 218h1v1h-1zM471 218h1v1h-1zM468 219h1v1h-1zM465 220h1v1h-1zM464 222h1v1h-1zM463 224h1v1h-1zM463 226h1v1h-1zM464 228h1v1h-1zM466 229h1v1h-1zM468 230h1v1h-1zM470 230h1v1h-1zM472 230h1v1h-1zM474 229h1v1h-1zM475 227h1v1h-1zM476 226h1v1h-1zM475 224h1v1h-1zM474 222h1v1h-1zM472 221h1v1h-1zM470 221h1v1h-1zM468 221h1v1h-1zM466 222h1v1h-1zM464 223h1v1h-1zM463 225h1v1h-1zM463 227h1v1h-1zM464 229h1v1h-1zM465 231h1v1h-1zM468 232h1v1h-1zM471 233h1v1h-1zM473 233h1v1h-1zM476 232h1v1h-1zM478 230h1v1h-1zM480 228h1v1h-1zM488 226h1v1h-1zM488 223h1v1h-1zM487 220h1v1h-1zM484 218h1v1h-1zM482 216h1v1h-1zM478 216h1v1h-1zM475 216h1v1h-1zM472 216h1v1h-1zM469 218h1v1h-1zM467 220h1v1h-1zM466 225h1v1h-1zM466 227h1v1h-1zM467 229h1v1h-1zM470 231h1v1h-1zM472 232h1v1h-1zM475 233h1v1h-1zM478 232h1v1h-1zM480 231h1v1h-1zM482 230h1v1h-1zM483 228h1v1h-1zM484 226h1v1h-1zM483 223h1v1h-1zM482 221h1v1h-1zM480 220h1v1h-1zM478 219h1v1h-1zM475 218h1v1h-1zM472 219h1v1h-1zM470 220h1v1h-1zM467 222h1v1h-1zM466 224h1v1h-1zM466 226h1v1h-1zM467 231h1v1h-1zM469 233h1v1h-1zM472 235h1v1h-1zM475 235h1v1h-1zM478 235h1v1h-1zM482 235h1v1h-1zM484 233h1v1h-1zM487 231h1v1h-1zM488 228h1v1h-1zM498 226h1v1h-1zM498 222h1v1h-1zM496 219h1v1h-1zM494 217h1v1h-1zM491 215h1v1h-1zM488 213h1v1h-1zM484 213h1v1h-1zM480 213h1v1h-1zM477 214h1v1h-1zM474 216h1v1h-1zM469 223h1v1h-1zM469 226h1v1h-1zM470 229h1v1h-1zM472 231h1v1h-1zM474 233h1v1h-1zM477 234h1v1h-1zM480 235h1v1h-1zM483 235h1v1h-1zM486 234h1v1h-1zM489 232h1v1h-1zM491 230h1v1h-1zM492 228h1v1h-1zM493 226h1v1h-1zM492 223h1v1h-1zM491 221h1v1h-1zM489 219h1v1h-1zM486 217h1v1h-1zM483 216h1v1h-1zM480 216h1v1h-1zM477 217h1v1h-1zM474 218h1v1h-1zM472 220h1v1h-1zM470 222h1v1h-1zM469 225h1v1h-1zM469 228h1v1h-1zM474 235h1v1h-1zM477 237h1v1h-1zM480 238h1v1h-1zM484 238h1v1h-1zM488 238h1v1h-1zM491 236h1v1h-1zM494 234h1v1h-1zM496 232h1v1h-1zM498 229h1v1h-1zM509 226h1v1h-1zM509 222h1v1h-1zM507 219h1v1h-1zM505 216h1v1h-1zM502 213h1v1h-1zM498 211h1v1h-1zM494 210h1v1h-1zM490 210h1v1h-1zM486 210h1v1h-1zM482 211h1v1h-1zM479 213h1v1h-1zM476 215h1v1h-1zM473 221h1v1h-1zM472 224h1v1h-1zM473 228h1v1h-1zM474 231h1v1h-1zM476 233h1v1h-1zM479 235h1v1h-1zM482 237h1v1h-1zM486 238h1v1h-1zM490 238h1v1h-1zM493 237h1v1h-1zM496 236h1v1h-1zM499 234h1v1h-1zM501 231h1v1h-1zM502 228h1v1h-1zM503 226h1v1h-1zM502 223h1v1h-1zM501 220h1v1h-1zM499 217h1v1h-1zM496 215h1v1h-1zM493 214h1v1h-1zM490 213h1v1h-1zM486 213h1v1h-1zM482 214h1v1h-1zM479 216h1v1h-1zM476 218h1v1h-1zM474 220h1v1h-1zM473 223h1v1h-1zM472 227h1v1h-1zM473 230h1v1h-1zM476 236h1v1h-1zM479 238h1v1h-1zM482 240h1v1h-1zM486 241h1v1h-1zM490 241h1v1h-1zM494 241h1v1h-1zM498 240h1v1h-1zM502 238h1v1h-1zM505 235h1v1h-1zM507 232h1v1h-1zM509 229h1v1h-1zM521 226h1v1h-1zM521 222h1v1h-1zM519 218h1v1h-1zM517 214h1v1h-1zM514 212h1v1h-1zM510 209h1v1h-1zM506 207h1v1h-1zM502 206h1v1h-1zM497 206h1v1h-1zM493 207h1v1h-1zM488 208h1v1h-1zM485 210h1v1h-1zM481 213h1v1h-1zM477 219h1v1h-1zM476 223h1v1h-1zM477 230h1v1h-1zM479 233h1v1h-1zM482 236h1v1h-1zM485 238h1v1h-1zM489 240h1v1h-1zM492 240h1v1h-1zM497 241h1v1h-1zM501 240h1v1h-1zM504 239h1v1h-1zM508 237h1v1h-1zM510 235h1v1h-1zM513 232h1v1h-1zM514 229h1v1h-1zM514 226h1v1h-1zM514 222h1v1h-1zM513 219h1v1h-1zM510 216h1v1h-1zM508 214h1v1h-1zM504 212h1v1h-1zM501 211h1v1h-1zM497 210h1v1h-1zM492 211h1v1h-1zM489 211h1v1h-1zM485 213h1v1h-1zM482 215h1v1h-1zM479 218h1v1h-1zM477 221h1v1h-1zM476 225h1v1h-1zM476 228h1v1h-1zM477 232h1v1h-1zM481 238h1v1h-1zM485 241h1v1h-1zM488 243h1v1h-1zM493 244h1v1h-1zM497 245h1v1h-1zM502 245h1v1h-1zM506 244h1v1h-1zM510 242h1v1h-1zM514 239h1v1h-1zM517 237h1v1h-1zM519 233h1v1h-1zM521 229h1v1h-1zM535 226h1v1h-1zM534 221h1v1h-1zM533 217h1v1h-1zM531 213h1v1h-1zM528 210h1v1h-1zM524 207h1v1h-1zM519 205h1v1h-1zM515 203h1v1h-1zM510 202h1v1h-1zM505 202h1v1h-1zM500 203h1v1h-1zM495 205h1v1h-1zM491 207h1v1h-1zM487 210h1v1h-1zM481 220h1v1h-1zM481 224h1v1h-1zM481 228h1v1h-1zM482 232h1v1h-1zM485 235h1v1h-1zM491 241h1v1h-1zM495 243h1v1h-1zM500 244h1v1h-1zM504 244h1v1h-1zM509 244h1v1h-1zM513 243h1v1h-1zM517 241h1v1h-1zM520 239h1v1h-1zM523 236h1v1h-1zM525 233h1v1h-1zM527 229h1v1h-1zM527 226h1v1h-1zM527 222h1v1h-1zM525 218h1v1h-1zM523 215h1v1h-1zM520 212h1v1h-1zM517 210h1v1h-1zM513 208h1v1h-1zM509 207h1v1h-1zM504 207h1v1h-1zM500 207h1v1h-1zM495 208h1v1h-1zM491 210h1v1h-1zM485 216h1v1h-1zM482 219h1v1h-1zM481 223h1v1h-1zM481 227h1v1h-1zM481 231h1v1h-1zM487 241h1v1h-1zM491 244h1v1h-1zM495 246h1v1h-1zM500 248h1v1h-1zM505 249h1v1h-1zM510 249h1v1h-1zM515 248h1v1h-1zM519 246h1v1h-1zM524 244h1v1h-1zM528 241h1v1h-1zM531 238h1v1h-1zM533 234h1v1h-1zM534 230h1v1h-1zM545 212h1v1h-1zM542 208h1v1h-1zM538 205h1v1h-1zM534 202h1v1h-1zM529 200h1v1h-1zM524 199h1v1h-1zM518 198h1v1h-1zM513 198h1v1h-1zM507 199h1v1h-1zM502 201h1v1h-1zM498 203h1v1h-1zM494 206h1v1h-1zM488 214h1v1h-1zM486 218h1v1h-1zM485 222h1v1h-1zM485 226h1v1h-1zM486 231h1v1h-1zM488 235h1v1h-1zM491 238h1v1h-1zM498 244h1v1h-1zM503 246h1v1h-1zM507 247h1v1h-1zM512 248h1v1h-1zM517 248h1v1h-1zM522 247h1v1h-1zM527 245h1v1h-1zM531 243h1v1h-1zM534 240h1v1h-1zM537 237h1v1h-1zM539 233h1v1h-1zM541 230h1v1h-1zM541 226h1v1h-1zM541 221h1v1h-1zM539 218h1v1h-1zM537 214h1v1h-1zM534 211h1v1h-1zM531 208h1v1h-1zM527 206h1v1h-1zM522 204h1v1h-1zM517 203h1v1h-1zM512 203h1v1h-1zM507 204h1v1h-1zM503 205h1v1h-1zM498 207h1v1h-1zM491 213h1v1h-1zM488 216h1v1h-1zM486 220h1v1h-1zM485 225h1v1h-1zM485 229h1v1h-1zM486 233h1v1h-1zM488 237h1v1h-1zM494 245h1v1h-1zM498 248h1v1h-1zM502 250h1v1h-1zM507 252h1v1h-1zM513 253h1v1h-1zM518 253h1v1h-1zM524 252h1v1h-1zM529 251h1v1h-1zM534 249h1v1h-1zM538 246h1v1h-1zM542 243h1v1h-1zM545 239h1v1h-1zM545 197h1v1h-1zM539 195h1v1h-1zM533 194h1v1h-1zM527 194h1v1h-1zM522 194h1v1h-1zM516 195h1v1h-1zM510 197h1v1h-1zM505 200h1v1h-1zM501 203h1v1h-1zM492 215h1v1h-1zM491 219h1v1h-1zM491 224h1v1h-1zM491 229h1v1h-1zM492 233h1v1h-1zM495 237h1v1h-1zM498 241h1v1h-1zM506 247h1v1h-1zM511 250h1v1h-1zM516 251h1v1h-1zM521 252h1v1h-1zM526 252h1v1h-1zM532 251h1v1h-1zM537 250h1v1h-1zM542 248h1v1h-1zM542 203h1v1h-1zM537 201h1v1h-1zM532 200h1v1h-1zM526 199h1v1h-1zM521 199h1v1h-1zM516 200h1v1h-1zM511 201h1v1h-1zM506 204h1v1h-1zM498 210h1v1h-1zM495 214h1v1h-1zM492 218h1v1h-1zM491 222h1v1h-1zM491 227h1v1h-1zM491 232h1v1h-1zM492 236h1v1h-1zM501 248h1v1h-1zM505 251h1v1h-1zM510 254h1v1h-1zM516 256h1v1h-1zM522 257h1v1h-1zM527 257h1v1h-1zM533 257h1v1h-1zM539 256h1v1h-1zM545 254h1v1h-1zM544 189h1v1h-1zM537 189h1v1h-1zM531 189h1v1h-1zM525 191h1v1h-1zM519 193h1v1h-1zM514 195h1v1h-1zM509 199h1v1h-1zM505 203h1v1h-1zM501 207h1v1h-1zM499 211h1v1h-1zM497 216h1v1h-1zM496 221h1v1h-1zM496 226h1v1h-1zM497 231h1v1h-1zM499 236h1v1h-1zM502 241h1v1h-1zM505 245h1v1h-1zM509 248h1v1h-1zM514 251h1v1h-1zM519 254h1v1h-1zM525 255h1v1h-1zM530 256h1v1h-1zM536 256h1v1h-1zM542 256h1v1h-1zM542 195h1v1h-1zM536 195h1v1h-1zM530 195h1v1h-1zM525 196h1v1h-1zM519 197h1v1h-1zM514 200h1v1h-1zM509 203h1v1h-1zM505 206h1v1h-1zM502 210h1v1h-1zM499 215h1v1h-1zM497 220h1v1h-1zM496 225h1v1h-1zM496 230h1v1h-1zM497 235h1v1h-1zM499 240h1v1h-1zM501 244h1v1h-1zM505 248h1v1h-1zM509 252h1v1h-1zM514 256h1v1h-1zM519 258h1v1h-1zM525 260h1v1h-1zM531 262h1v1h-1zM537 262h1v1h-1zM544 262h1v1h-1zM541 184h1v1h-1zM534 186h1v1h-1zM528 188h1v1h-1zM522 191h1v1h-1zM517 194h1v1h-1zM513 199h1v1h-1zM506 208h1v1h-1zM504 213h1v1h-1zM503 218h1v1h-1zM502 224h1v1h-1zM503 229h1v1h-1zM504 234h1v1h-1zM506 239h1v1h-1zM513 248h1v1h-1zM518 252h1v1h-1zM523 255h1v1h-1zM528 258h1v1h-1zM534 260h1v1h-1zM541 261h1v1h-1zM541 190h1v1h-1zM534 191h1v1h-1zM528 193h1v1h-1zM523 196h1v1h-1zM518 199h1v1h-1zM513 203h1v1h-1zM506 212h1v1h-1zM504 217h1v1h-1zM503 222h1v1h-1zM502 227h1v1h-1zM503 233h1v1h-1zM504 238h1v1h-1zM506 243h1v1h-1zM513 252h1v1h-1zM517 257h1v1h-1zM522 260h1v1h-1zM528 263h1v1h-1zM534 265h1v1h-1zM541 267h1v1h-1zM545 181h1v1h-1zM538 183h1v1h-1zM532 186h1v1h-1zM526 190h1v1h-1zM521 194h1v1h-1zM517 199h1v1h-1zM514 204h1v1h-1zM511 209h1v1h-1zM509 215h1v1h-1zM509 221h1v1h-1zM509 227h1v1h-1zM510 232h1v1h-1zM512 238h1v1h-1zM514 243h1v1h-1zM518 248h1v1h-1zM522 252h1v1h-1zM527 256h1v1h-1zM532 260h1v1h-1zM538 262h1v1h-1zM545 264h1v1h-1zM545 187h1v1h-1zM538 189h1v1h-1zM532 191h1v1h-1zM527 195h1v1h-1zM522 199h1v1h-1zM518 203h1v1h-1zM514 208h1v1h-1zM512 213h1v1h-1zM510 219h1v1h-1zM509 224h1v1h-1zM509 230h1v1h-1zM509 236h1v1h-1zM511 242h1v1h-1zM514 247h1v1h-1zM517 252h1v1h-1zM521 257h1v1h-1zM526 261h1v1h-1zM532 265h1v1h-1zM538 268h1v1h-1zM545 270h1v1h-1zM542 181h1v1h-1zM536 185h1v1h-1zM531 190h1v1h-1zM526 194h1v1h-1zM522 200h1v1h-1zM517 211h1v1h-1zM516 217h1v1h-1zM515 224h1v1h-1zM516 230h1v1h-1zM517 236h1v1h-1zM520 241h1v1h-1zM523 247h1v1h-1zM527 252h1v1h-1zM531 257h1v1h-1zM537 261h1v1h-1zM543 264h1v1h-1zM543 187h1v1h-1zM537 190h1v1h-1zM531 194h1v1h-1zM527 199h1v1h-1zM523 204h1v1h-1zM520 210h1v1h-1zM517 215h1v1h-1zM516 221h1v1h-1zM515 227h1v1h-1zM516 234h1v1h-1zM517 240h1v1h-1zM522 251h1v1h-1zM526 257h1v1h-1zM531 261h1v1h-1zM536 266h1v1h-1zM542 270h1v1h-1zM274 55h1v1h-1zM271 55h1v1h-1zM269 56h1v1h-1zM267 58h1v1h-1zM265 60h1v1h-1zM265 62h1v1h-1zM265 64h1v1h-1zM265 66h1v1h-1zM267 68h1v1h-1zM269 69h1v1h-1zM271 69h1v1h-1zM273 69h1v1h-1zM275 69h1v1h-1zM277 68h1v1h-1zM278 67h1v1h-1zM279 65h1v1h-1zM279 63h1v1h-1zM278 62h1v1h-1zM277 61h1v1h-1zM275 60h1v1h-1zM274 60h1v1h-1zM272 60h1v1h-1zM270 61h1v1h-1zM269 62h1v1h-1zM268 63h1v1h-1zM268 65h1v1h-1zM269 67h1v1h-1zM270 68h1v1h-1zM272 69h1v1h-1zM274 69h1v1h-1zM276 69h1v1h-1zM278 69h1v1h-1zM280 68h1v1h-1zM282 66h1v1h-1zM282 64h1v1h-1zM282 62h1v1h-1zM282 60h1v1h-1zM280 58h1v1h-1zM278 56h1v1h-1zM276 55h1v1h-1zM274 46h1v1h-1zM270 47h1v1h-1zM268 48h1v1h-1zM265 49h1v1h-1zM263 51h1v1h-1zM262 53h1v1h-1zM261 56h1v1h-1zM261 58h1v1h-1zM262 61h1v1h-1zM263 63h1v1h-1zM265 65h1v1h-1zM268 66h1v1h-1zM270 67h1v1h-1zM273 67h1v1h-1zM275 66h1v1h-1zM278 65h1v1h-1zM279 64h1v1h-1zM281 62h1v1h-1zM281 60h1v1h-1zM281 58h1v1h-1zM281 56h1v1h-1zM279 54h1v1h-1zM278 53h1v1h-1zM276 52h1v1h-1zM274 52h1v1h-1zM271 52h1v1h-1zM269 53h1v1h-1zM268 54h1v1h-1zM266 56h1v1h-1zM266 58h1v1h-1zM266 60h1v1h-1zM266 62h1v1h-1zM268 64h1v1h-1zM269 65h1v1h-1zM272 66h1v1h-1zM274 67h1v1h-1zM277 67h1v1h-1zM279 66h1v1h-1zM282 65h1v1h-1zM284 63h1v1h-1zM285 61h1v1h-1zM286 58h1v1h-1zM286 56h1v1h-1zM285 53h1v1h-1zM284 51h1v1h-1zM282 49h1v1h-1zM279 48h1v1h-1zM277 47h1v1h-1zM274 36h1v1h-1zM270 37h1v1h-1zM267 38h1v1h-1zM264 39h1v1h-1zM261 41h1v1h-1zM259 44h1v1h-1zM258 46h1v1h-1zM257 49h1v1h-1zM257 52h1v1h-1zM258 55h1v1h-1zM259 58h1v1h-1zM261 60h1v1h-1zM264 62h1v1h-1zM267 63h1v1h-1zM270 64h1v1h-1zM273 64h1v1h-1zM276 63h1v1h-1zM279 62h1v1h-1zM283 58h1v1h-1zM284 56h1v1h-1zM285 54h1v1h-1zM285 51h1v1h-1zM284 49h1v1h-1zM283 47h1v1h-1zM281 45h1v1h-1zM279 44h1v1h-1zM276 43h1v1h-1zM274 43h1v1h-1zM271 43h1v1h-1zM268 44h1v1h-1zM266 45h1v1h-1zM264 47h1v1h-1zM263 49h1v1h-1zM262 51h1v1h-1zM262 54h1v1h-1zM263 56h1v1h-1zM264 58h1v1h-1zM268 62h1v1h-1zM271 63h1v1h-1zM274 64h1v1h-1zM277 64h1v1h-1zM280 63h1v1h-1zM283 62h1v1h-1zM286 60h1v1h-1zM288 58h1v1h-1zM289 55h1v1h-1zM290 52h1v1h-1zM290 49h1v1h-1zM289 46h1v1h-1zM288 44h1v1h-1zM286 41h1v1h-1zM283 39h1v1h-1zM280 38h1v1h-1zM277 37h1v1h-1zM274 25h1v1h-1zM270 25h1v1h-1zM266 26h1v1h-1zM262 28h1v1h-1zM259 30h1v1h-1zM257 32h1v1h-1zM254 35h1v1h-1zM253 38h1v1h-1zM252 42h1v1h-1zM253 45h1v1h-1zM253 48h1v1h-1zM255 51h1v1h-1zM257 54h1v1h-1zM259 56h1v1h-1zM262 58h1v1h-1zM266 59h1v1h-1zM269 60h1v1h-1zM273 60h1v1h-1zM276 59h1v1h-1zM279 58h1v1h-1zM282 57h1v1h-1zM285 55h1v1h-1zM287 52h1v1h-1zM288 50h1v1h-1zM288 47h1v1h-1zM288 41h1v1h-1zM286 39h1v1h-1zM285 37h1v1h-1zM282 35h1v1h-1zM280 33h1v1h-1zM277 33h1v1h-1zM274 32h1v1h-1zM270 33h1v1h-1zM267 33h1v1h-1zM265 35h1v1h-1zM262 37h1v1h-1zM261 39h1v1h-1zM259 41h1v1h-1zM259 47h1v1h-1zM259 50h1v1h-1zM260 52h1v1h-1zM262 55h1v1h-1zM265 57h1v1h-1zM268 58h1v1h-1zM271 59h1v1h-1zM278 60h1v1h-1zM281 59h1v1h-1zM285 58h1v1h-1zM288 56h1v1h-1zM290 54h1v1h-1zM292 51h1v1h-1zM294 48h1v1h-1zM294 45h1v1h-1zM295 42h1v1h-1zM294 38h1v1h-1zM293 35h1v1h-1zM290 32h1v1h-1zM288 30h1v1h-1zM285 28h1v1h-1zM281 26h1v1h-1zM277 25h1v1h-1zM274 12h1v1h-1zM269 12h1v1h-1zM265 13h1v1h-1zM261 15h1v1h-1zM257 17h1v1h-1zM254 19h1v1h-1zM251 22h1v1h-1zM249 26h1v1h-1zM248 29h1v1h-1zM247 33h1v1h-1zM247 37h1v1h-1zM248 40h1v1h-1zM250 44h1v1h-1zM252 47h1v1h-1zM254 50h1v1h-1zM261 54h1v1h-1zM265 55h1v1h-1zM273 56h1v1h-1zM277 55h1v1h-1zM280 54h1v1h-1zM284 53h1v1h-1zM287 50h1v1h-1zM289 48h1v1h-1zM291 45h1v1h-1zM292 42h1v1h-1zM293 39h1v1h-1zM293 36h1v1h-1zM292 33h1v1h-1zM291 30h1v1h-1zM289 27h1v1h-1zM286 25h1v1h-1zM284 23h1v1h-1zM280 21h1v1h-1zM277 21h1v1h-1zM274 20h1v1h-1zM270 21h1v1h-1zM267 21h1v1h-1zM263 23h1v1h-1zM261 25h1v1h-1zM258 27h1v1h-1zM256 30h1v1h-1zM255 33h1v1h-1zM254 36h1v1h-1zM254 39h1v1h-1zM255 42h1v1h-1zM256 45h1v1h-1zM258 48h1v1h-1zM260 50h1v1h-1zM263 53h1v1h-1zM267 54h1v1h-1zM270 55h1v1h-1zM274 56h1v1h-1zM282 55h1v1h-1zM286 54h1v1h-1zM293 50h1v1h-1zM295 47h1v1h-1zM297 44h1v1h-1zM299 40h1v1h-1zM300 37h1v1h-1zM300 33h1v1h-1zM299 29h1v1h-1zM298 26h1v1h-1zM296 22h1v1h-1zM293 19h1v1h-1zM290 17h1v1h-1zM286 15h1v1h-1zM282 13h1v1h-1zM278 12h1v1h-1zM255 2h1v1h-1zM252 5h1v1h-1zM248 8h1v1h-1zM246 12h1v1h-1zM244 15h1v1h-1zM242 19h1v1h-1zM242 23h1v1h-1zM242 27h1v1h-1zM242 31h1v1h-1zM244 35h1v1h-1zM246 39h1v1h-1zM249 42h1v1h-1zM252 45h1v1h-1zM256 47h1v1h-1zM260 49h1v1h-1zM264 50h1v1h-1zM268 51h1v1h-1zM273 51h1v1h-1zM277 51h1v1h-1zM281 49h1v1h-1zM285 48h1v1h-1zM288 46h1v1h-1zM291 43h1v1h-1zM294 40h1v1h-1zM296 37h1v1h-1zM297 33h1v1h-1zM298 30h1v1h-1zM297 23h1v1h-1zM296 19h1v1h-1zM294 16h1v1h-1zM291 14h1v1h-1zM288 11h1v1h-1zM285 9h1v1h-1zM281 8h1v1h-1zM277 7h1v1h-1zM274 7h1v1h-1zM270 7h1v1h-1zM266 8h1v1h-1zM262 9h1v1h-1zM259 11h1v1h-1zM256 14h1v1h-1zM253 16h1v1h-1zM251 19h1v1h-1zM250 23h1v1h-1zM249 30h1v1h-1zM250 33h1v1h-1zM251 37h1v1h-1zM253 40h1v1h-1zM256 43h1v1h-1zM259 46h1v1h-1zM262 48h1v1h-1zM266 49h1v1h-1zM270 51h1v1h-1zM274 51h1v1h-1zM279 51h1v1h-1zM283 50h1v1h-1zM287 49h1v1h-1zM291 47h1v1h-1zM295 45h1v1h-1zM298 42h1v1h-1zM301 39h1v1h-1zM303 35h1v1h-1zM305 31h1v1h-1zM305 27h1v1h-1zM305 23h1v1h-1zM305 19h1v1h-1zM303 15h1v1h-1zM301 12h1v1h-1zM299 8h1v1h-1zM295 5h1v1h-1zM292 2h1v1h-1zM237 4h1v1h-1zM236 8h1v1h-1zM235 13h1v1h-1zM235 17h1v1h-1zM236 22h1v1h-1zM238 26h1v1h-1zM240 30h1v1h-1zM242 34h1v1h-1zM246 37h1v1h-1zM249 40h1v1h-1zM254 42h1v1h-1zM258 44h1v1h-1zM263 45h1v1h-1zM268 46h1v1h-1zM272 46h1v1h-1zM277 45h1v1h-1zM282 44h1v1h-1zM286 43h1v1h-1zM290 40h1v1h-1zM297 35h1v1h-1zM299 31h1v1h-1zM301 28h1v1h-1zM303 24h1v1h-1zM303 20h1v1h-1zM303 16h1v1h-1zM303 12h1v1h-1zM301 8h1v1h-1zM299 5h1v1h-1zM297 2h1v1h-1zM250 2h1v1h-1zM248 5h1v1h-1zM246 8h1v1h-1zM244 12h1v1h-1zM244 16h1v1h-1zM244 20h1v1h-1zM244 24h1v1h-1zM246 28h1v1h-1zM248 31h1v1h-1zM250 35h1v1h-1zM257 40h1v1h-1zM261 43h1v1h-1zM265 44h1v1h-1zM270 45h1v1h-1zM275 46h1v1h-1zM279 46h1v1h-1zM284 45h1v1h-1zM289 44h1v1h-1zM293 42h1v1h-1zM298 40h1v1h-1zM301 37h1v1h-1zM305 34h1v1h-1zM307 30h1v1h-1zM309 26h1v1h-1zM311 22h1v1h-1zM312 17h1v1h-1zM312 13h1v1h-1zM311 8h1v1h-1zM310 4h1v1h-1zM228 1h1v1h-1zM229 6h1v1h-1zM229 11h1v1h-1zM231 15h1v1h-1zM233 20h1v1h-1zM236 24h1v1h-1zM239 28h1v1h-1zM243 31h1v1h-1zM247 34h1v1h-1zM252 37h1v1h-1zM257 38h1v1h-1zM262 40h1v1h-1zM267 40h1v1h-1zM272 40h1v1h-1zM278 40h1v1h-1zM288 37h1v1h-1zM292 35h1v1h-1zM296 32h1v1h-1zM300 29h1v1h-1zM303 26h1v1h-1zM306 22h1v1h-1zM307 18h1v1h-1zM309 13h1v1h-1zM309 9h1v1h-1zM309 5h1v1h-1zM238 5h1v1h-1zM238 9h1v1h-1zM238 13h1v1h-1zM240 18h1v1h-1zM241 22h1v1h-1zM244 25h1v1h-1zM247 29h1v1h-1zM251 32h1v1h-1zM255 35h1v1h-1zM259 37h1v1h-1zM269 40h1v1h-1zM275 40h1v1h-1zM280 40h1v1h-1zM285 40h1v1h-1zM290 38h1v1h-1zM295 37h1v1h-1zM300 34h1v1h-1zM304 31h1v1h-1zM308 28h1v1h-1zM311 24h1v1h-1zM314 20h1v1h-1zM316 15h1v1h-1zM318 11h1v1h-1zM318 6h1v1h-1zM319 1h1v1h-1zM223 4h1v1h-1zM225 9h1v1h-1zM228 14h1v1h-1zM232 18h1v1h-1zM235 22h1v1h-1zM240 25h1v1h-1zM245 28h1v1h-1zM250 30h1v1h-1zM255 32h1v1h-1zM261 34h1v1h-1zM267 34h1v1h-1zM272 34h1v1h-1zM278 34h1v1h-1zM283 33h1v1h-1zM289 31h1v1h-1zM294 29h1v1h-1zM303 23h1v1h-1zM306 19h1v1h-1zM310 15h1v1h-1zM312 11h1v1h-1zM314 7h1v1h-1zM315 2h1v1h-1zM232 2h1v1h-1zM233 7h1v1h-1zM235 11h1v1h-1zM237 15h1v1h-1zM241 19h1v1h-1zM244 23h1v1h-1zM253 29h1v1h-1zM258 31h1v1h-1zM264 33h1v1h-1zM269 34h1v1h-1zM275 34h1v1h-1zM280 34h1v1h-1zM286 34h1v1h-1zM292 32h1v1h-1zM297 30h1v1h-1zM302 28h1v1h-1zM307 25h1v1h-1zM312 22h1v1h-1zM315 18h1v1h-1zM319 14h1v1h-1zM322 9h1v1h-1zM324 4h1v1h-1zM220 2h1v1h-1zM224 7h1v1h-1zM228 11h1v1h-1zM232 15h1v1h-1zM237 18h1v1h-1zM242 21h1v1h-1zM248 24h1v1h-1zM254 26h1v1h-1zM260 27h1v1h-1zM266 28h1v1h-1zM272 28h1v1h-1zM278 27h1v1h-1zM284 26h1v1h-1zM290 24h1v1h-1zM301 19h1v1h-1zM306 16h1v1h-1zM310 12h1v1h-1zM314 8h1v1h-1zM317 4h1v1h-1zM230 4h1v1h-1zM233 8h1v1h-1zM237 12h1v1h-1zM241 16h1v1h-1zM246 19h1v1h-1zM257 24h1v1h-1zM263 26h1v1h-1zM269 27h1v1h-1zM275 28h1v1h-1zM281 28h1v1h-1zM287 27h1v1h-1zM293 26h1v1h-1zM299 24h1v1h-1zM305 21h1v1h-1zM310 18h1v1h-1zM315 15h1v1h-1zM319 11h1v1h-1zM323 7h1v1h-1zM327 2h1v1h-1zM224 4h1v1h-1zM229 8h1v1h-1zM234 11h1v1h-1zM240 14h1v1h-1zM246 17h1v1h-1zM252 19h1v1h-1zM259 20h1v1h-1zM265 21h1v1h-1zM272 21h1v1h-1zM279 20h1v1h-1zM285 19h1v1h-1zM291 17h1v1h-1zM297 15h1v1h-1zM308 9h1v1h-1zM313 5h1v1h-1zM317 1h1v1h-1zM230 1h1v1h-1zM234 5h1v1h-1zM239 9h1v1h-1zM250 15h1v1h-1zM256 17h1v1h-1zM262 19h1v1h-1zM268 20h1v1h-1zM275 21h1v1h-1zM282 21h1v1h-1zM288 20h1v1h-1zM295 19h1v1h-1zM301 17h1v1h-1zM307 14h1v1h-1zM313 11h1v1h-1zM318 8h1v1h-1zM323 4h1v1h-1zM274 395h1v1h-1zM276 395h1v1h-1zM278 394h1v1h-1zM280 392h1v1h-1zM282 390h1v1h-1zM282 388h1v1h-1zM282 386h1v1h-1zM282 384h1v1h-1zM280 382h1v1h-1zM278 381h1v1h-1zM276 381h1v1h-1zM274 381h1v1h-1zM272 381h1v1h-1zM270 382h1v1h-1zM269 383h1v1h-1zM268 385h1v1h-1zM268 387h1v1h-1zM269 388h1v1h-1zM270 389h1v1h-1zM272 390h1v1h-1zM274 391h1v1h-1zM275 390h1v1h-1zM277 389h1v1h-1zM278 388h1v1h-1zM279 387h1v1h-1zM279 385h1v1h-1zM278 383h1v1h-1zM277 382h1v1h-1zM275 381h1v1h-1zM273 381h1v1h-1zM271 381h1v1h-1zM269 381h1v1h-1zM267 382h1v1h-1zM265 384h1v1h-1zM265 386h1v1h-1zM265 388h1v1h-1zM265 390h1v1h-1zM267 392h1v1h-1zM269 394h1v1h-1zM271 395h1v1h-1zM274 404h1v1h-1zM277 403h1v1h-1zM279 402h1v1h-1zM282 401h1v1h-1zM284 399h1v1h-1zM285 397h1v1h-1zM286 394h1v1h-1zM286 392h1v1h-1zM285 389h1v1h-1zM284 387h1v1h-1zM282 385h1v1h-1zM279 384h1v1h-1zM277 383h1v1h-1zM274 383h1v1h-1zM272 384h1v1h-1zM269 385h1v1h-1zM268 386h1v1h-1zM266 388h1v1h-1zM266 390h1v1h-1zM266 392h1v1h-1zM266 394h1v1h-1zM268 396h1v1h-1zM269 397h1v1h-1zM271 398h1v1h-1zM274 398h1v1h-1zM276 398h1v1h-1zM278 397h1v1h-1zM279 396h1v1h-1zM281 394h1v1h-1zM281 392h1v1h-1zM281 390h1v1h-1zM281 388h1v1h-1zM279 386h1v1h-1zM278 385h1v1h-1zM275 384h1v1h-1zM273 383h1v1h-1zM270 383h1v1h-1zM268 384h1v1h-1zM265 385h1v1h-1zM263 387h1v1h-1zM262 389h1v1h-1zM261 392h1v1h-1zM261 394h1v1h-1zM262 397h1v1h-1zM263 399h1v1h-1zM265 401h1v1h-1zM268 402h1v1h-1zM270 403h1v1h-1zM274 414h1v1h-1zM277 413h1v1h-1zM280 412h1v1h-1zM283 411h1v1h-1zM286 409h1v1h-1zM288 406h1v1h-1zM289 404h1v1h-1zM290 401h1v1h-1zM290 398h1v1h-1zM289 395h1v1h-1zM288 392h1v1h-1zM286 390h1v1h-1zM283 388h1v1h-1zM280 387h1v1h-1zM277 386h1v1h-1zM274 386h1v1h-1zM271 387h1v1h-1zM268 388h1v1h-1zM264 392h1v1h-1zM263 394h1v1h-1zM262 396h1v1h-1zM262 399h1v1h-1zM263 401h1v1h-1zM264 403h1v1h-1zM266 405h1v1h-1zM268 406h1v1h-1zM271 407h1v1h-1zM274 407h1v1h-1zM276 407h1v1h-1zM279 406h1v1h-1zM281 405h1v1h-1zM283 403h1v1h-1zM284 401h1v1h-1zM285 399h1v1h-1zM285 396h1v1h-1zM284 394h1v1h-1zM283 392h1v1h-1zM279 388h1v1h-1zM276 387h1v1h-1zM273 386h1v1h-1zM270 386h1v1h-1zM267 387h1v1h-1zM264 388h1v1h-1zM261 390h1v1h-1zM259 392h1v1h-1zM258 395h1v1h-1zM257 398h1v1h-1zM257 401h1v1h-1zM258 404h1v1h-1zM259 406h1v1h-1zM261 409h1v1h-1zM264 411h1v1h-1zM267 412h1v1h-1zM270 413h1v1h-1zM274 425h1v1h-1zM277 425h1v1h-1zM281 424h1v1h-1zM285 422h1v1h-1zM288 420h1v1h-1zM290 418h1v1h-1zM293 415h1v1h-1zM294 412h1v1h-1zM295 408h1v1h-1zM294 405h1v1h-1zM294 402h1v1h-1zM292 399h1v1h-1zM290 396h1v1h-1zM288 394h1v1h-1zM285 392h1v1h-1zM281 391h1v1h-1zM278 390h1v1h-1zM274 390h1v1h-1zM271 391h1v1h-1zM268 392h1v1h-1zM265 393h1v1h-1zM262 395h1v1h-1zM260 398h1v1h-1zM259 400h1v1h-1zM259 403h1v1h-1zM259 409h1v1h-1zM261 411h1v1h-1zM262 413h1v1h-1zM265 415h1v1h-1zM267 417h1v1h-1zM270 417h1v1h-1zM274 418h1v1h-1zM277 417h1v1h-1zM280 417h1v1h-1zM282 415h1v1h-1zM285 413h1v1h-1zM286 411h1v1h-1zM288 409h1v1h-1zM288 403h1v1h-1zM288 400h1v1h-1zM287 398h1v1h-1zM285 395h1v1h-1zM282 393h1v1h-1zM279 392h1v1h-1zM276 391h1v1h-1zM273 390h1v1h-1zM269 390h1v1h-1zM266 391h1v1h-1zM262 392h1v1h-1zM259 394h1v1h-1zM257 396h1v1h-1zM255 399h1v1h-1zM253 402h1v1h-1zM253 405h1v1h-1zM252 408h1v1h-1zM253 412h1v1h-1zM254 415h1v1h-1zM257 418h1v1h-1zM259 420h1v1h-1zM262 422h1v1h-1zM266 424h1v1h-1zM270 425h1v1h-1zM274 438h1v1h-1zM278 438h1v1h-1zM282 437h1v1h-1zM286 435h1v1h-1zM290 433h1v1h-1zM293 431h1v1h-1zM296 428h1v1h-1zM298 424h1v1h-1zM299 421h1v1h-1zM300 417h1v1h-1zM300 413h1v1h-1zM299 410h1v1h-1zM297 406h1v1h-1zM295 403h1v1h-1zM293 400h1v1h-1zM286 396h1v1h-1zM282 395h1v1h-1zM274 394h1v1h-1zM270 395h1v1h-1zM267 396h1v1h-1zM263 397h1v1h-1zM260 400h1v1h-1zM258 402h1v1h-1zM256 405h1v1h-1zM255 408h1v1h-1zM254 411h1v1h-1zM254 414h1v1h-1zM255 417h1v1h-1zM256 420h1v1h-1zM258 423h1v1h-1zM261 425h1v1h-1zM263 427h1v1h-1zM267 429h1v1h-1zM270 429h1v1h-1zM274 430h1v1h-1zM277 429h1v1h-1zM280 429h1v1h-1zM284 427h1v1h-1zM286 425h1v1h-1zM289 423h1v1h-1zM291 420h1v1h-1zM292 417h1v1h-1zM293 414h1v1h-1zM293 411h1v1h-1zM292 408h1v1h-1zM291 405h1v1h-1zM289 402h1v1h-1zM287 400h1v1h-1zM284 397h1v1h-1zM280 396h1v1h-1zM277 395h1v1h-1zM273 394h1v1h-1zM265 395h1v1h-1zM261 396h1v1h-1zM254 400h1v1h-1zM252 403h1v1h-1zM250 406h1v1h-1zM248 410h1v1h-1zM247 413h1v1h-1zM247 417h1v1h-1zM248 421h1v1h-1zM249 424h1v1h-1zM251 428h1v1h-1zM254 431h1v1h-1zM257 433h1v1h-1zM261 435h1v1h-1zM265 437h1v1h-1zM269 438h1v1h-1zM292 448h1v1h-1zM295 445h1v1h-1zM299 442h1v1h-1zM301 438h1v1h-1zM303 435h1v1h-1zM305 431h1v1h-1zM305 427h1v1h-1zM305 423h1v1h-1zM305 419h1v1h-1zM303 415h1v1h-1zM301 411h1v1h-1zM298 408h1v1h-1zM295 405h1v1h-1zM291 403h1v1h-1zM287 401h1v1h-1zM283 400h1v1h-1zM279 399h1v1h-1zM274 399h1v1h-1zM270 399h1v1h-1zM266 401h1v1h-1zM262 402h1v1h-1zM259 404h1v1h-1zM256 407h1v1h-1zM253 410h1v1h-1zM251 413h1v1h-1zM250 417h1v1h-1zM249 420h1v1h-1zM250 427h1v1h-1zM251 431h1v1h-1zM253 434h1v1h-1zM256 436h1v1h-1zM259 439h1v1h-1zM262 441h1v1h-1zM266 442h1v1h-1zM270 443h1v1h-1zM274 443h1v1h-1zM277 443h1v1h-1zM281 442h1v1h-1zM285 441h1v1h-1zM288 439h1v1h-1zM291 436h1v1h-1zM294 434h1v1h-1zM296 431h1v1h-1zM297 427h1v1h-1zM298 420h1v1h-1zM297 417h1v1h-1zM296 413h1v1h-1zM294 410h1v1h-1zM291 407h1v1h-1zM288 404h1v1h-1zM285 402h1v1h-1zM281 401h1v1h-1zM277 399h1v1h-1zM273 399h1v1h-1zM268 399h1v1h-1zM264 400h1v1h-1zM260 401h1v1h-1zM256 403h1v1h-1zM252 405h1v1h-1zM249 408h1v1h-1zM246 411h1v1h-1zM244 415h1v1h-1zM242 419h1v1h-1zM242 423h1v1h-1zM242 427h1v1h-1zM242 431h1v1h-1zM244 435h1v1h-1zM246 438h1v1h-1zM248 442h1v1h-1zM252 445h1v1h-1zM255 448h1v1h-1zM310 446h1v1h-1zM311 442h1v1h-1zM312 437h1v1h-1zM312 433h1v1h-1zM311 428h1v1h-1zM309 424h1v1h-1zM307 420h1v1h-1zM305 416h1v1h-1zM301 413h1v1h-1zM298 410h1v1h-1zM293 408h1v1h-1zM289 406h1v1h-1zM284 405h1v1h-1zM279 404h1v1h-1zM275 404h1v1h-1zM270 405h1v1h-1zM265 406h1v1h-1zM261 407h1v1h-1zM257 410h1v1h-1zM250 415h1v1h-1zM248 419h1v1h-1zM246 422h1v1h-1zM244 426h1v1h-1zM244 430h1v1h-1zM244 434h1v1h-1zM244 438h1v1h-1zM246 442h1v1h-1zM248 445h1v1h-1zM250 448h1v1h-1zM297 448h1v1h-1zM299 445h1v1h-1zM301 442h1v1h-1zM303 438h1v1h-1zM303 434h1v1h-1zM303 430h1v1h-1zM303 426h1v1h-1zM301 422h1v1h-1zM299 419h1v1h-1zM297 415h1v1h-1zM290 410h1v1h-1zM286 407h1v1h-1zM282 406h1v1h-1zM277 405h1v1h-1zM272 404h1v1h-1zM268 404h1v1h-1zM263 405h1v1h-1zM258 406h1v1h-1zM254 408h1v1h-1zM249 410h1v1h-1zM246 413h1v1h-1zM242 416h1v1h-1zM240 420h1v1h-1zM238 424h1v1h-1zM236 428h1v1h-1zM235 433h1v1h-1zM235 437h1v1h-1zM236 442h1v1h-1zM237 446h1v1h-1zM318 444h1v1h-1zM318 439h1v1h-1zM316 435h1v1h-1zM314 430h1v1h-1zM311 426h1v1h-1zM308 422h1v1h-1zM304 419h1v1h-1zM300 416h1v1h-1zM295 413h1v1h-1zM290 412h1v1h-1zM285 410h1v1h-1zM280 410h1v1h-1zM275 410h1v1h-1zM269 410h1v1h-1zM259 413h1v1h-1zM255 415h1v1h-1zM251 418h1v1h-1zM247 421h1v1h-1zM244 425h1v1h-1zM241 428h1v1h-1zM240 432h1v1h-1zM238 437h1v1h-1zM238 441h1v1h-1zM238 445h1v1h-1zM309 445h1v1h-1zM309 441h1v1h-1zM309 437h1v1h-1zM307 432h1v1h-1zM306 428h1v1h-1zM303 425h1v1h-1zM300 421h1v1h-1zM296 418h1v1h-1zM292 415h1v1h-1zM288 413h1v1h-1zM278 410h1v1h-1zM272 410h1v1h-1zM267 410h1v1h-1zM262 410h1v1h-1zM257 412h1v1h-1zM252 413h1v1h-1zM247 416h1v1h-1zM243 419h1v1h-1zM239 422h1v1h-1zM236 426h1v1h-1zM233 430h1v1h-1zM231 435h1v1h-1zM229 439h1v1h-1zM229 444h1v1h-1zM324 446h1v1h-1zM322 441h1v1h-1zM319 436h1v1h-1zM315 432h1v1h-1zM312 428h1v1h-1zM307 425h1v1h-1zM302 422h1v1h-1zM297 420h1v1h-1zM292 418h1v1h-1zM286 416h1v1h-1zM280 416h1v1h-1zM275 416h1v1h-1zM269 416h1v1h-1zM264 417h1v1h-1zM258 419h1v1h-1zM253 421h1v1h-1zM244 427h1v1h-1zM241 431h1v1h-1zM237 435h1v1h-1zM235 439h1v1h-1zM233 443h1v1h-1zM232 448h1v1h-1zM315 448h1v1h-1zM314 443h1v1h-1zM312 439h1v1h-1zM310 435h1v1h-1zM306 431h1v1h-1zM303 427h1v1h-1zM294 421h1v1h-1zM289 419h1v1h-1zM283 417h1v1h-1zM278 416h1v1h-1zM272 416h1v1h-1zM267 416h1v1h-1zM261 416h1v1h-1zM255 418h1v1h-1zM250 420h1v1h-1zM245 422h1v1h-1zM240 425h1v1h-1zM235 428h1v1h-1zM232 432h1v1h-1zM228 436h1v1h-1zM225 441h1v1h-1zM223 446h1v1h-1zM327 448h1v1h-1zM323 443h1v1h-1zM319 439h1v1h-1zM315 435h1v1h-1zM310 432h1v1h-1zM305 429h1v1h-1zM299 426h1v1h-1zM293 424h1v1h-1zM287 423h1v1h-1zM281 422h1v1h-1zM275 422h1v1h-1zM269 423h1v1h-1zM263 424h1v1h-1zM257 426h1v1h-1zM246 431h1v1h-1zM241 434h1v1h-1zM237 438h1v1h-1zM233 442h1v1h-1zM230 446h1v1h-1zM317 446h1v1h-1zM314 442h1v1h-1zM310 438h1v1h-1zM306 434h1v1h-1zM301 431h1v1h-1zM290 426h1v1h-1zM284 424h1v1h-1zM278 423h1v1h-1zM272 422h1v1h-1zM266 422h1v1h-1zM260 423h1v1h-1zM254 424h1v1h-1zM248 426h1v1h-1zM242 429h1v1h-1zM237 432h1v1h-1zM232 435h1v1h-1zM228 439h1v1h-1zM224 443h1v1h-1zM220 448h1v1h-1zM323 446h1v1h-1zM318 442h1v1h-1zM313 439h1v1h-1zM307 436h1v1h-1zM301 433h1v1h-1zM295 431h1v1h-1zM288 430h1v1h-1zM282 430h1v1h-1zM275 429h1v1h-1zM268 430h1v1h-1zM262 431h1v1h-1zM256 433h1v1h-1zM250 435h1v1h-1zM239 441h1v1h-1zM234 445h1v1h-1zM313 445h1v1h-1zM308 441h1v1h-1zM297 435h1v1h-1zM291 433h1v1h-1zM285 431h1v1h-1zM279 430h1v1h-1zM272 429h1v1h-1zM265 430h1v1h-1zM259 430h1v1h-1zM252 431h1v1h-1zM246 433h1v1h-1zM240 436h1v1h-1zM234 439h1v1h-1zM229 442h1v1h-1zM224 446h1v1h-1zM69 54h1v1h-1zM67 60h1v1h-1zM66 64h1v1h-1zM66 66h1v1h-1zM68 71h1v1h-1zM69 72h1v1h-1zM72 76h1v1h-1zM77 74h1v1h-1zM79 71h1v1h-1zM84 69h1v1h-1zM85 70h1v1h-1zM86 63h1v1h-1zM87 62h1v1h-1zM86 60h1v1h-1zM83 54h1v1h-1zM82 57h1v1h-1zM77 56h1v1h-1zM75 56h1v1h-1zM73 58h1v1h-1zM71 60h1v1h-1zM69 64h1v1h-1zM70 67h1v1h-1zM71 72h1v1h-1zM73 72h1v1h-1zM75 74h1v1h-1zM81 71h1v1h-1zM83 70h1v1h-1zM88 69h1v1h-1zM87 64h1v1h-1zM90 60h1v1h-1zM88 55h1v1h-1zM85 53h1v1h-1zM84 52h1v1h-1zM81 51h1v1h-1zM77 51h1v1h-1zM72 53h1v1h-1zM63 49h1v1h-1zM59 53h1v1h-1zM58 56h1v1h-1zM55 60h1v1h-1zM57 64h1v1h-1zM60 70h1v1h-1zM63 72h1v1h-1zM67 72h1v1h-1zM70 73h1v1h-1zM74 72h1v1h-1zM79 72h1v1h-1zM80 66h1v1h-1zM84 63h1v1h-1zM87 56h1v1h-1zM83 53h1v1h-1zM81 49h1v1h-1zM79 47h1v1h-1zM75 47h1v1h-1zM70 48h1v1h-1zM67 49h1v1h-1zM64 51h1v1h-1zM63 55h1v1h-1zM63 59h1v1h-1zM62 63h1v1h-1zM62 69h1v1h-1zM64 69h1v1h-1zM67 70h1v1h-1zM70 72h1v1h-1zM76 69h1v1h-1zM78 69h1v1h-1zM82 67h1v1h-1zM84 64h1v1h-1zM87 59h1v1h-1zM84 50h1v1h-1zM84 47h1v1h-1zM83 43h1v1h-1zM78 42h1v1h-1zM76 41h1v1h-1zM68 43h1v1h-1zM65 44h1v1h-1zM51 42h1v1h-1zM49 46h1v1h-1zM47 51h1v1h-1zM47 56h1v1h-1zM46 61h1v1h-1zM48 64h1v1h-1zM51 69h1v1h-1zM55 71h1v1h-1zM58 73h1v1h-1zM62 75h1v1h-1zM68 73h1v1h-1zM73 73h1v1h-1zM78 67h1v1h-1zM81 62h1v1h-1zM83 60h1v1h-1zM83 50h1v1h-1zM83 45h1v1h-1zM80 40h1v1h-1zM77 40h1v1h-1zM73 38h1v1h-1zM68 38h1v1h-1zM64 40h1v1h-1zM59 42h1v1h-1zM57 45h1v1h-1zM55 47h1v1h-1zM53 53h1v1h-1zM52 58h1v1h-1zM52 59h1v1h-1zM50 67h1v1h-1zM57 68h1v1h-1zM63 68h1v1h-1zM65 72h1v1h-1zM69 71h1v1h-1zM74 68h1v1h-1zM78 65h1v1h-1zM86 57h1v1h-1zM84 55h1v1h-1zM84 48h1v1h-1zM85 43h1v1h-1zM82 40h1v1h-1zM81 34h1v1h-1zM75 33h1v1h-1zM72 32h1v1h-1zM66 32h1v1h-1zM61 34h1v1h-1zM57 36h1v1h-1zM41 30h1v1h-1zM38 36h1v1h-1zM37 41h1v1h-1zM36 48h1v1h-1zM34 52h1v1h-1zM35 60h1v1h-1zM36 65h1v1h-1zM40 67h1v1h-1zM45 72h1v1h-1zM51 72h1v1h-1zM56 73h1v1h-1zM66 70h1v1h-1zM72 67h1v1h-1zM76 63h1v1h-1zM78 57h1v1h-1zM81 53h1v1h-1zM82 48h1v1h-1zM81 42h1v1h-1zM80 36h1v1h-1zM78 31h1v1h-1zM74 31h1v1h-1zM71 28h1v1h-1zM64 29h1v1h-1zM60 26h1v1h-1zM56 29h1v1h-1zM50 31h1v1h-1zM46 36h1v1h-1zM44 40h1v1h-1zM41 44h1v1h-1zM41 51h1v1h-1zM41 56h1v1h-1zM43 59h1v1h-1zM44 66h1v1h-1zM47 68h1v1h-1zM52 69h1v1h-1zM55 69h1v1h-1zM64 68h1v1h-1zM68 69h1v1h-1zM71 65h1v1h-1zM76 61h1v1h-1zM80 56h1v1h-1zM82 51h1v1h-1zM81 41h1v1h-1zM83 34h1v1h-1zM81 32h1v1h-1zM78 25h1v1h-1zM73 23h1v1h-1zM69 22h1v1h-1zM64 21h1v1h-1zM58 22h1v1h-1zM51 27h1v1h-1zM46 26h1v1h-1zM30 21h1v1h-1zM25 28h1v1h-1zM24 32h1v1h-1zM23 38h1v1h-1zM20 46h1v1h-1zM21 52h1v1h-1zM23 58h1v1h-1zM25 62h1v1h-1zM30 67h1v1h-1zM34 70h1v1h-1zM40 70h1v1h-1zM47 71h1v1h-1zM54 71h1v1h-1zM59 67h1v1h-1zM63 64h1v1h-1zM69 61h1v1h-1zM75 57h1v1h-1zM77 50h1v1h-1zM79 44h1v1h-1zM81 40h1v1h-1zM80 32h1v1h-1zM77 28h1v1h-1zM75 24h1v1h-1zM69 20h1v1h-1zM66 17h1v1h-1zM62 18h1v1h-1zM55 15h1v1h-1zM50 17h1v1h-1zM45 19h1v1h-1zM39 22h1v1h-1zM37 28h1v1h-1zM33 30h1v1h-1zM27 37h1v1h-1zM29 43h1v1h-1zM28 48h1v1h-1zM29 53h1v1h-1zM30 57h1v1h-1zM35 62h1v1h-1zM39 66h1v1h-1zM43 69h1v1h-1zM50 70h1v1h-1zM55 68h1v1h-1zM61 66h1v1h-1zM64 64h1v1h-1zM72 60h1v1h-1zM73 55h1v1h-1zM79 48h1v1h-1zM83 37h1v1h-1zM83 31h1v1h-1zM82 25h1v1h-1zM79 20h1v1h-1zM75 16h1v1h-1zM69 11h1v1h-1zM67 12h1v1h-1zM59 8h1v1h-1zM54 9h1v1h-1zM45 10h1v1h-1zM41 11h1v1h-1zM36 16h1v1h-1zM18 11h1v1h-1zM14 18h1v1h-1zM9 21h1v1h-1zM8 30h1v1h-1zM7 36h1v1h-1zM6 43h1v1h-1zM8 50h1v1h-1zM10 54h1v1h-1zM15 61h1v1h-1zM18 65h1v1h-1zM24 68h1v1h-1zM29 69h1v1h-1zM37 70h1v1h-1zM44 69h1v1h-1zM49 69h1v1h-1zM56 64h1v1h-1zM62 60h1v1h-1zM66 55h1v1h-1zM71 49h1v1h-1zM74 44h1v1h-1zM76 37h1v1h-1zM76 30h1v1h-1zM77 25h1v1h-1zM74 16h1v1h-1zM73 13h1v1h-1zM68 9h1v1h-1zM64 6h1v1h-1zM58 1h1v1h-1zM52 2h1v1h-1zM45 4h1v1h-1zM40 6h1v1h-1zM34 7h1v1h-1zM28 11h1v1h-1zM23 15h1v1h-1zM21 22h1v1h-1zM16 27h1v1h-1zM15 33h1v1h-1zM15 40h1v1h-1zM14 45h1v1h-1zM17 52h1v1h-1zM20 55h1v1h-1zM22 61h1v1h-1zM29 66h1v1h-1zM33 65h1v1h-1zM46 66h1v1h-1zM52 67h1v1h-1zM58 63h1v1h-1zM65 61h1v1h-1zM68 54h1v1h-1zM74 48h1v1h-1zM77 42h1v1h-1zM80 35h1v1h-1zM80 28h1v1h-1zM81 21h1v1h-1zM79 16h1v1h-1zM77 9h1v1h-1zM74 4h1v1h-1zM67 2h1v1h-1zM29 2h1v1h-1zM25 4h1v1h-1zM2 58h1v1h-1zM6 65h1v1h-1zM13 67h1v1h-1zM20 69h1v1h-1zM27 70h1v1h-1zM35 69h1v1h-1zM42 68h1v1h-1zM49 65h1v1h-1zM54 61h1v1h-1zM59 54h1v1h-1zM65 48h1v1h-1zM69 42h1v1h-1zM73 37h1v1h-1zM73 27h1v1h-1zM72 20h1v1h-1zM75 13h1v1h-1zM72 8h1v1h-1zM68 2h1v1h-1zM10 3h1v1h-1zM7 9h1v1h-1zM3 15h1v1h-1zM2 49h1v1h-1zM7 54h1v1h-1zM12 59h1v1h-1zM17 61h1v1h-1zM21 66h1v1h-1zM28 66h1v1h-1zM37 65h1v1h-1zM41 62h1v1h-1zM48 59h1v1h-1zM57 58h1v1h-1zM62 52h1v1h-1zM67 47h1v1h-1zM71 41h1v1h-1zM75 34h1v1h-1zM77 18h1v1h-1zM77 11h1v1h-1zM76 5h1v1h-1zM1 67h1v1h-1zM7 69h1v1h-1zM14 69h1v1h-1zM23 69h1v1h-1zM31 66h1v1h-1zM38 63h1v1h-1zM46 58h1v1h-1zM57 49h1v1h-1zM68 35h1v1h-1zM68 26h1v1h-1zM70 18h1v1h-1zM72 12h1v1h-1zM72 2h1v1h-1zM3 61h1v1h-1zM12 62h1v1h-1zM18 63h1v1h-1zM24 64h1v1h-1zM34 61h1v1h-1zM39 61h1v1h-1zM48 55h1v1h-1zM53 52h1v1h-1zM59 46h1v1h-1zM66 40h1v1h-1zM69 32h1v1h-1zM73 24h1v1h-1zM76 8h1v1h-1zM2 68h1v1h-1zM11 67h1v1h-1zM19 63h1v1h-1zM26 60h1v1h-1zM36 58h1v1h-1zM44 52h1v1h-1zM50 46h1v1h-1zM55 39h1v1h-1zM60 32h1v1h-1zM65 23h1v1h-1zM67 15h1v1h-1zM69 7h1v1h-1zM8 63h1v1h-1zM11 63h1v1h-1zM22 59h1v1h-1zM29 58h1v1h-1zM39 54h1v1h-1zM45 50h1v1h-1zM51 43h1v1h-1zM58 39h1v1h-1zM63 29h1v1h-1zM66 21h1v1h-1zM69 12h1v1h-1zM73 5h1v1h-1zM7 63h1v1h-1zM16 60h1v1h-1zM26 57h1v1h-1zM35 51h1v1h-1zM40 46h1v1h-1zM46 38h1v1h-1zM53 30h1v1h-1zM57 23h1v1h-1zM61 14h1v1h-1zM62 1h1v1h-1zM11 60h1v1h-1zM18 57h1v1h-1zM24 52h1v1h-1zM35 46h1v1h-1zM47 36h1v1h-1zM54 31h1v1h-1zM60 20h1v1h-1zM64 10h1v1h-1zM67 3h1v1h-1zM4 59h1v1h-1zM13 57h1v1h-1zM22 52h1v1h-1zM31 43h1v1h-1zM36 37h1v1h-1zM44 30h1v1h-1zM49 20h1v1h-1zM56 13h1v1h-1zM58 3h1v1h-1zM5 53h1v1h-1zM15 52h1v1h-1zM24 48h1v1h-1zM31 42h1v1h-1zM40 32h1v1h-1zM48 27h1v1h-1zM50 18h1v1h-1zM57 9h1v1h-1zM10 49h1v1h-1zM19 44h1v1h-1zM25 34h1v1h-1zM35 28h1v1h-1zM41 19h1v1h-1zM46 10h1v1h-1zM3 51h1v1h-1zM10 44h1v1h-1zM19 38h1v1h-1zM29 31h1v1h-1zM37 25h1v1h-1zM44 17h1v1h-1zM49 8h1v1h-1zM480 54h1v1h-1zM475 52h1v1h-1zM473 52h1v1h-1zM467 51h1v1h-1zM463 53h1v1h-1zM461 54h1v1h-1zM458 57h1v1h-1zM460 63h1v1h-1zM460 68h1v1h-1zM464 70h1v1h-1zM466 72h1v1h-1zM468 72h1v1h-1zM472 73h1v1h-1zM476 70h1v1h-1zM477 67h1v1h-1zM475 67h1v1h-1zM477 62h1v1h-1zM477 58h1v1h-1zM474 58h1v1h-1zM470 56h1v1h-1zM463 54h1v1h-1zM464 56h1v1h-1zM462 60h1v1h-1zM459 62h1v1h-1zM459 66h1v1h-1zM460 69h1v1h-1zM462 71h1v1h-1zM468 73h1v1h-1zM470 77h1v1h-1zM475 75h1v1h-1zM477 72h1v1h-1zM480 71h1v1h-1zM482 67h1v1h-1zM482 63h1v1h-1zM482 58h1v1h-1zM485 49h1v1h-1zM482 47h1v1h-1zM477 43h1v1h-1zM472 44h1v1h-1zM469 43h1v1h-1zM467 45h1v1h-1zM463 47h1v1h-1zM461 51h1v1h-1zM460 55h1v1h-1zM459 57h1v1h-1zM462 62h1v1h-1zM465 67h1v1h-1zM467 68h1v1h-1zM470 71h1v1h-1zM476 71h1v1h-1zM479 69h1v1h-1zM483 67h1v1h-1zM486 65h1v1h-1zM486 62h1v1h-1zM486 59h1v1h-1zM484 54h1v1h-1zM482 52h1v1h-1zM480 49h1v1h-1zM476 47h1v1h-1zM472 49h1v1h-1zM468 47h1v1h-1zM466 49h1v1h-1zM464 53h1v1h-1zM463 60h1v1h-1zM462 64h1v1h-1zM466 68h1v1h-1zM469 70h1v1h-1zM473 73h1v1h-1zM477 75h1v1h-1zM481 74h1v1h-1zM486 72h1v1h-1zM488 71h1v1h-1zM491 65h1v1h-1zM491 61h1v1h-1zM491 57h1v1h-1zM489 51h1v1h-1zM493 43h1v1h-1zM494 36h1v1h-1zM485 33h1v1h-1zM480 32h1v1h-1zM476 34h1v1h-1zM472 34h1v1h-1zM466 36h1v1h-1zM464 39h1v1h-1zM461 43h1v1h-1zM461 48h1v1h-1zM462 52h1v1h-1zM463 57h1v1h-1zM465 63h1v1h-1zM468 65h1v1h-1zM472 67h1v1h-1zM481 71h1v1h-1zM487 70h1v1h-1zM489 68h1v1h-1zM493 64h1v1h-1zM496 62h1v1h-1zM494 59h1v1h-1zM495 53h1v1h-1zM494 48h1v1h-1zM492 43h1v1h-1zM487 40h1v1h-1zM485 39h1v1h-1zM480 37h1v1h-1zM473 38h1v1h-1zM470 38h1v1h-1zM468 41h1v1h-1zM463 45h1v1h-1zM464 48h1v1h-1zM464 59h1v1h-1zM468 64h1v1h-1zM470 67h1v1h-1zM475 68h1v1h-1zM479 75h1v1h-1zM484 74h1v1h-1zM489 75h1v1h-1zM493 72h1v1h-1zM495 69h1v1h-1zM500 65h1v1h-1zM500 61h1v1h-1zM503 55h1v1h-1zM502 50h1v1h-1zM498 45h1v1h-1zM504 32h1v1h-1zM499 28h1v1h-1zM497 24h1v1h-1zM490 22h1v1h-1zM481 21h1v1h-1zM479 21h1v1h-1zM474 23h1v1h-1zM472 26h1v1h-1zM466 31h1v1h-1zM463 34h1v1h-1zM463 42h1v1h-1zM462 46h1v1h-1zM465 50h1v1h-1zM469 56h1v1h-1zM471 60h1v1h-1zM475 65h1v1h-1zM481 67h1v1h-1zM485 70h1v1h-1zM491 68h1v1h-1zM499 67h1v1h-1zM502 65h1v1h-1zM505 58h1v1h-1zM506 56h1v1h-1zM508 52h1v1h-1zM506 46h1v1h-1zM504 40h1v1h-1zM501 37h1v1h-1zM498 34h1v1h-1zM491 28h1v1h-1zM486 28h1v1h-1zM483 27h1v1h-1zM478 27h1v1h-1zM474 32h1v1h-1zM470 35h1v1h-1zM469 35h1v1h-1zM467 43h1v1h-1zM469 58h1v1h-1zM473 63h1v1h-1zM481 68h1v1h-1zM485 72h1v1h-1zM491 74h1v1h-1zM496 70h1v1h-1zM502 71h1v1h-1zM505 69h1v1h-1zM510 66h1v1h-1zM511 60h1v1h-1zM512 53h1v1h-1zM513 48h1v1h-1zM512 41h1v1h-1zM508 35h1v1h-1zM517 22h1v1h-1zM512 19h1v1h-1zM506 13h1v1h-1zM500 9h1v1h-1zM493 9h1v1h-1zM488 8h1v1h-1zM482 10h1v1h-1zM476 13h1v1h-1zM470 17h1v1h-1zM467 20h1v1h-1zM465 27h1v1h-1zM465 32h1v1h-1zM466 38h1v1h-1zM466 46h1v1h-1zM469 51h1v1h-1zM473 55h1v1h-1zM477 61h1v1h-1zM480 65h1v1h-1zM488 67h1v1h-1zM492 68h1v1h-1zM498 69h1v1h-1zM502 66h1v1h-1zM509 63h1v1h-1zM512 62h1v1h-1zM516 58h1v1h-1zM518 53h1v1h-1zM518 48h1v1h-1zM521 42h1v1h-1zM516 37h1v1h-1zM516 31h1v1h-1zM511 26h1v1h-1zM506 21h1v1h-1zM501 19h1v1h-1zM497 17h1v1h-1zM492 16h1v1h-1zM484 16h1v1h-1zM478 17h1v1h-1zM477 20h1v1h-1zM473 26h1v1h-1zM471 30h1v1h-1zM470 34h1v1h-1zM470 41h1v1h-1zM467 44h1v1h-1zM471 52h1v1h-1zM473 57h1v1h-1zM479 61h1v1h-1zM487 66h1v1h-1zM494 71h1v1h-1zM499 72h1v1h-1zM508 71h1v1h-1zM512 70h1v1h-1zM516 67h1v1h-1zM522 63h1v1h-1zM522 57h1v1h-1zM525 51h1v1h-1zM527 46h1v1h-1zM525 39h1v1h-1zM523 32h1v1h-1zM520 26h1v1h-1zM528 10h1v1h-1zM523 6h1v1h-1zM516 1h1v1h-1zM479 2h1v1h-1zM475 4h1v1h-1zM469 11h1v1h-1zM466 15h1v1h-1zM467 23h1v1h-1zM465 31h1v1h-1zM474 49h1v1h-1zM479 51h1v1h-1zM484 56h1v1h-1zM490 65h1v1h-1zM496 64h1v1h-1zM502 67h1v1h-1zM508 66h1v1h-1zM514 65h1v1h-1zM520 64h1v1h-1zM525 60h1v1h-1zM529 54h1v1h-1zM530 50h1v1h-1zM532 46h1v1h-1zM533 39h1v1h-1zM531 31h1v1h-1zM531 27h1v1h-1zM528 23h1v1h-1zM523 14h1v1h-1zM518 11h1v1h-1zM513 7h1v1h-1zM507 4h1v1h-1zM500 3h1v1h-1zM497 3h1v1h-1zM490 5h1v1h-1zM484 6h1v1h-1zM479 7h1v1h-1zM475 14h1v1h-1zM471 19h1v1h-1zM470 25h1v1h-1zM468 31h1v1h-1zM472 38h1v1h-1zM478 52h1v1h-1zM479 54h1v1h-1zM485 62h1v1h-1zM491 64h1v1h-1zM496 67h1v1h-1zM503 71h1v1h-1zM510 72h1v1h-1zM517 71h1v1h-1zM523 67h1v1h-1zM530 66h1v1h-1zM533 62h1v1h-1zM536 56h1v1h-1zM539 52h1v1h-1zM540 42h1v1h-1zM542 36h1v1h-1zM539 30h1v1h-1zM536 21h1v1h-1zM534 17h1v1h-1zM470 5h1v1h-1zM469 18h1v1h-1zM470 27h1v1h-1zM472 32h1v1h-1zM476 41h1v1h-1zM480 48h1v1h-1zM487 53h1v1h-1zM499 61h1v1h-1zM506 62h1v1h-1zM511 64h1v1h-1zM518 65h1v1h-1zM526 65h1v1h-1zM530 62h1v1h-1zM537 59h1v1h-1zM541 55h1v1h-1zM544 48h1v1h-1zM544 15h1v1h-1zM543 9h1v1h-1zM536 3h1v1h-1zM477 4h1v1h-1zM476 6h1v1h-1zM473 15h1v1h-1zM473 22h1v1h-1zM473 28h1v1h-1zM474 36h1v1h-1zM479 43h1v1h-1zM483 50h1v1h-1zM487 54h1v1h-1zM492 60h1v1h-1zM499 63h1v1h-1zM505 68h1v1h-1zM513 71h1v1h-1zM521 68h1v1h-1zM528 68h1v1h-1zM534 67h1v1h-1zM539 64h1v1h-1zM544 61h1v1h-1zM472 8h1v1h-1zM472 17h1v1h-1zM475 25h1v1h-1zM477 33h1v1h-1zM480 39h1v1h-1zM488 44h1v1h-1zM493 52h1v1h-1zM501 55h1v1h-1zM507 61h1v1h-1zM513 63h1v1h-1zM524 64h1v1h-1zM537 62h1v1h-1zM545 59h1v1h-1zM476 11h1v1h-1zM476 17h1v1h-1zM478 35h1v1h-1zM485 41h1v1h-1zM490 47h1v1h-1zM494 54h1v1h-1zM503 60h1v1h-1zM509 64h1v1h-1zM516 66h1v1h-1zM524 68h1v1h-1zM533 68h1v1h-1zM539 69h1v1h-1zM475 5h1v1h-1zM478 12h1v1h-1zM480 22h1v1h-1zM483 30h1v1h-1zM491 36h1v1h-1zM495 43h1v1h-1zM511 54h1v1h-1zM520 59h1v1h-1zM524 62h1v1h-1zM534 61h1v1h-1zM542 62h1v1h-1zM479 6h1v1h-1zM479 17h1v1h-1zM483 24h1v1h-1zM488 31h1v1h-1zM492 40h1v1h-1zM497 46h1v1h-1zM504 51h1v1h-1zM510 58h1v1h-1zM520 62h1v1h-1zM529 64h1v1h-1zM535 66h1v1h-1zM479 4h1v1h-1zM482 12h1v1h-1zM487 20h1v1h-1zM494 28h1v1h-1zM498 36h1v1h-1zM506 43h1v1h-1zM512 49h1v1h-1zM521 52h1v1h-1zM531 57h1v1h-1zM539 58h1v1h-1zM484 5h1v1h-1zM488 13h1v1h-1zM489 23h1v1h-1zM494 30h1v1h-1zM499 36h1v1h-1zM509 45h1v1h-1zM515 51h1v1h-1zM523 56h1v1h-1zM532 59h1v1h-1zM542 63h1v1h-1zM490 9h1v1h-1zM493 17h1v1h-1zM502 26h1v1h-1zM507 32h1v1h-1zM516 40h1v1h-1zM524 45h1v1h-1zM532 53h1v1h-1zM543 54h1v1h-1zM491 2h1v1h-1zM491 10h1v1h-1zM496 20h1v1h-1zM504 30h1v1h-1zM510 35h1v1h-1zM518 43h1v1h-1zM528 51h1v1h-1zM533 54h1v1h-1zM543 58h1v1h-1zM498 8h1v1h-1zM504 16h1v1h-1zM511 25h1v1h-1zM519 32h1v1h-1zM527 38h1v1h-1zM534 44h1v1h-1zM505 18h1v1h-1zM514 27h1v1h-1zM521 35h1v1h-1zM528 40h1v1h-1zM536 48h1v1h-1zM67 393h1v1h-1zM73 397h1v1h-1zM75 400h1v1h-1zM81 398h1v1h-1zM85 399h1v1h-1zM88 398h1v1h-1zM87 392h1v1h-1zM89 389h1v1h-1zM88 387h1v1h-1zM85 382h1v1h-1zM82 379h1v1h-1zM79 378h1v1h-1zM76 379h1v1h-1zM73 378h1v1h-1zM71 381h1v1h-1zM70 382h1v1h-1zM68 386h1v1h-1zM71 390h1v1h-1zM74 392h1v1h-1zM74 394h1v1h-1zM78 393h1v1h-1zM79 394h1v1h-1zM83 395h1v1h-1zM86 391h1v1h-1zM87 388h1v1h-1zM85 385h1v1h-1zM85 383h1v1h-1zM83 379h1v1h-1zM80 376h1v1h-1zM77 377h1v1h-1zM72 375h1v1h-1zM69 377h1v1h-1zM69 380h1v1h-1zM65 382h1v1h-1zM66 387h1v1h-1zM66 395h1v1h-1zM61 402h1v1h-1zM64 404h1v1h-1zM68 407h1v1h-1zM72 409h1v1h-1zM77 406h1v1h-1zM83 405h1v1h-1zM84 403h1v1h-1zM88 399h1v1h-1zM88 395h1v1h-1zM87 386h1v1h-1zM83 384h1v1h-1zM79 382h1v1h-1zM73 377h1v1h-1zM68 380h1v1h-1zM63 381h1v1h-1zM63 385h1v1h-1zM62 387h1v1h-1zM62 391h1v1h-1zM62 394h1v1h-1zM64 396h1v1h-1zM67 401h1v1h-1zM72 402h1v1h-1zM76 403h1v1h-1zM77 401h1v1h-1zM82 401h1v1h-1zM84 398h1v1h-1zM84 396h1v1h-1zM85 392h1v1h-1zM86 387h1v1h-1zM81 382h1v1h-1zM75 376h1v1h-1zM69 375h1v1h-1zM67 376h1v1h-1zM62 379h1v1h-1zM59 382h1v1h-1zM57 383h1v1h-1zM56 388h1v1h-1zM56 394h1v1h-1zM60 396h1v1h-1zM52 408h1v1h-1zM56 415h1v1h-1zM60 417h1v1h-1zM64 418h1v1h-1zM70 418h1v1h-1zM75 415h1v1h-1zM80 417h1v1h-1zM82 411h1v1h-1zM84 406h1v1h-1zM87 403h1v1h-1zM83 393h1v1h-1zM81 388h1v1h-1zM77 384h1v1h-1zM73 382h1v1h-1zM64 381h1v1h-1zM60 379h1v1h-1zM56 383h1v1h-1zM54 385h1v1h-1zM51 390h1v1h-1zM50 394h1v1h-1zM52 398h1v1h-1zM53 401h1v1h-1zM57 405h1v1h-1zM60 409h1v1h-1zM63 412h1v1h-1zM67 413h1v1h-1zM73 413h1v1h-1zM77 412h1v1h-1zM80 408h1v1h-1zM83 406h1v1h-1zM84 397h1v1h-1zM83 392h1v1h-1zM79 386h1v1h-1zM74 380h1v1h-1zM72 377h1v1h-1zM64 375h1v1h-1zM58 376h1v1h-1zM53 378h1v1h-1zM50 379h1v1h-1zM48 386h1v1h-1zM46 390h1v1h-1zM45 396h1v1h-1zM46 401h1v1h-1zM49 406h1v1h-1zM41 419h1v1h-1zM46 422h1v1h-1zM53 424h1v1h-1zM58 429h1v1h-1zM62 427h1v1h-1zM69 430h1v1h-1zM73 427h1v1h-1zM77 424h1v1h-1zM79 420h1v1h-1zM83 414h1v1h-1zM84 409h1v1h-1zM85 404h1v1h-1zM81 399h1v1h-1zM79 393h1v1h-1zM77 388h1v1h-1zM71 384h1v1h-1zM66 384h1v1h-1zM61 379h1v1h-1zM57 382h1v1h-1zM52 382h1v1h-1zM43 388h1v1h-1zM41 391h1v1h-1zM40 395h1v1h-1zM40 400h1v1h-1zM41 405h1v1h-1zM43 410h1v1h-1zM47 413h1v1h-1zM51 419h1v1h-1zM56 423h1v1h-1zM61 422h1v1h-1zM66 421h1v1h-1zM70 421h1v1h-1zM74 422h1v1h-1zM78 418h1v1h-1zM79 412h1v1h-1zM80 409h1v1h-1zM82 403h1v1h-1zM81 397h1v1h-1zM77 392h1v1h-1zM75 386h1v1h-1zM73 383h1v1h-1zM66 380h1v1h-1zM59 379h1v1h-1zM55 377h1v1h-1zM51 378h1v1h-1zM47 380h1v1h-1zM41 382h1v1h-1zM38 386h1v1h-1zM35 389h1v1h-1zM34 396h1v1h-1zM35 402h1v1h-1zM34 408h1v1h-1zM40 411h1v1h-1zM32 427h1v1h-1zM36 433h1v1h-1zM40 438h1v1h-1zM48 438h1v1h-1zM53 439h1v1h-1zM60 442h1v1h-1zM65 441h1v1h-1zM71 437h1v1h-1zM76 434h1v1h-1zM78 428h1v1h-1zM80 427h1v1h-1zM82 418h1v1h-1zM83 412h1v1h-1zM80 404h1v1h-1zM79 401h1v1h-1zM75 393h1v1h-1zM70 389h1v1h-1zM65 388h1v1h-1zM61 383h1v1h-1zM55 381h1v1h-1zM47 383h1v1h-1zM42 383h1v1h-1zM37 386h1v1h-1zM32 391h1v1h-1zM31 392h1v1h-1zM30 398h1v1h-1zM29 402h1v1h-1zM28 410h1v1h-1zM32 414h1v1h-1zM32 420h1v1h-1zM37 423h1v1h-1zM39 429h1v1h-1zM45 431h1v1h-1zM51 433h1v1h-1zM54 436h1v1h-1zM61 433h1v1h-1zM66 433h1v1h-1zM70 428h1v1h-1zM78 421h1v1h-1zM79 416h1v1h-1zM81 404h1v1h-1zM76 399h1v1h-1zM72 392h1v1h-1zM69 388h1v1h-1zM63 384h1v1h-1zM59 381h1v1h-1zM53 379h1v1h-1zM47 379h1v1h-1zM41 379h1v1h-1zM35 379h1v1h-1zM30 383h1v1h-1zM26 386h1v1h-1zM23 394h1v1h-1zM22 398h1v1h-1zM22 406h1v1h-1zM22 411h1v1h-1zM24 416h1v1h-1zM26 422h1v1h-1zM19 439h1v1h-1zM24 443h1v1h-1zM72 445h1v1h-1zM77 441h1v1h-1zM80 435h1v1h-1zM80 428h1v1h-1zM80 422h1v1h-1zM79 414h1v1h-1zM77 408h1v1h-1zM74 402h1v1h-1zM70 396h1v1h-1zM57 387h1v1h-1zM53 384h1v1h-1zM44 383h1v1h-1zM39 383h1v1h-1zM34 383h1v1h-1zM28 388h1v1h-1zM23 388h1v1h-1zM19 394h1v1h-1zM16 399h1v1h-1zM15 406h1v1h-1zM14 411h1v1h-1zM15 417h1v1h-1zM17 424h1v1h-1zM19 430h1v1h-1zM25 435h1v1h-1zM28 438h1v1h-1zM35 442h1v1h-1zM40 445h1v1h-1zM46 447h1v1h-1zM52 447h1v1h-1zM58 447h1v1h-1zM64 443h1v1h-1zM68 440h1v1h-1zM73 439h1v1h-1zM74 431h1v1h-1zM78 426h1v1h-1zM77 421h1v1h-1zM75 413h1v1h-1zM75 406h1v1h-1zM70 400h1v1h-1zM69 395h1v1h-1zM64 390h1v1h-1zM58 385h1v1h-1zM52 383h1v1h-1zM44 380h1v1h-1zM37 379h1v1h-1zM31 378h1v1h-1zM25 381h1v1h-1zM23 383h1v1h-1zM13 390h1v1h-1zM11 393h1v1h-1zM8 398h1v1h-1zM4 405h1v1h-1zM7 412h1v1h-1zM10 420h1v1h-1zM10 427h1v1h-1zM14 433h1v1h-1zM78 444h1v1h-1zM78 438h1v1h-1zM78 431h1v1h-1zM74 417h1v1h-1zM72 410h1v1h-1zM69 403h1v1h-1zM62 397h1v1h-1zM50 388h1v1h-1zM43 389h1v1h-1zM37 383h1v1h-1zM28 383h1v1h-1zM21 387h1v1h-1zM16 388h1v1h-1zM10 393h1v1h-1zM6 395h1v1h-1zM2 401h1v1h-1zM1 406h1v1h-1zM1 414h1v1h-1zM1 420h1v1h-1zM4 434h1v1h-1zM7 441h1v1h-1zM10 446h1v1h-1zM69 448h1v1h-1zM72 442h1v1h-1zM74 437h1v1h-1zM73 428h1v1h-1zM75 423h1v1h-1zM73 415h1v1h-1zM70 408h1v1h-1zM65 404h1v1h-1zM61 394h1v1h-1zM55 389h1v1h-1zM40 384h1v1h-1zM34 381h1v1h-1zM27 381h1v1h-1zM18 382h1v1h-1zM12 384h1v1h-1zM7 386h1v1h-1zM4 392h1v1h-1zM77 444h1v1h-1zM75 433h1v1h-1zM72 425h1v1h-1zM70 417h1v1h-1zM66 413h1v1h-1zM59 407h1v1h-1zM55 398h1v1h-1zM46 395h1v1h-1zM32 387h1v1h-1zM24 388h1v1h-1zM18 388h1v1h-1zM9 386h1v1h-1zM2 391h1v1h-1zM71 448h1v1h-1zM70 439h1v1h-1zM70 432h1v1h-1zM69 426h1v1h-1zM67 417h1v1h-1zM63 409h1v1h-1zM57 403h1v1h-1zM51 397h1v1h-1zM43 391h1v1h-1zM38 388h1v1h-1zM31 385h1v1h-1zM23 381h1v1h-1zM15 381h1v1h-1zM7 383h1v1h-1zM69 437h1v1h-1zM67 428h1v1h-1zM63 419h1v1h-1zM56 413h1v1h-1zM51 408h1v1h-1zM44 401h1v1h-1zM38 397h1v1h-1zM28 392h1v1h-1zM21 388h1v1h-1zM14 387h1v1h-1zM6 389h1v1h-1zM69 441h1v1h-1zM66 434h1v1h-1zM63 427h1v1h-1zM60 419h1v1h-1zM55 411h1v1h-1zM48 404h1v1h-1zM42 399h1v1h-1zM36 393h1v1h-1zM26 387h1v1h-1zM19 385h1v1h-1zM10 384h1v1h-1zM1 382h1v1h-1zM68 447h1v1h-1zM65 436h1v1h-1zM62 429h1v1h-1zM55 421h1v1h-1zM49 412h1v1h-1zM43 407h1v1h-1zM34 401h1v1h-1zM27 398h1v1h-1zM17 394h1v1h-1zM10 391h1v1h-1zM1 389h1v1h-1zM64 445h1v1h-1zM61 438h1v1h-1zM57 428h1v1h-1zM52 419h1v1h-1zM47 411h1v1h-1zM32 400h1v1h-1zM24 395h1v1h-1zM16 391h1v1h-1zM8 386h1v1h-1zM57 439h1v1h-1zM52 433h1v1h-1zM47 423h1v1h-1zM41 417h1v1h-1zM31 410h1v1h-1zM23 403h1v1h-1zM14 400h1v1h-1zM7 394h1v1h-1zM54 440h1v1h-1zM50 430h1v1h-1zM44 421h1v1h-1zM37 413h1v1h-1zM30 406h1v1h-1zM22 400h1v1h-1zM11 395h1v1h-1zM50 445h1v1h-1zM42 434h1v1h-1zM36 427h1v1h-1zM28 418h1v1h-1zM21 411h1v1h-1zM10 405h1v1h-1zM47 442h1v1h-1zM41 433h1v1h-1zM35 423h1v1h-1zM27 415h1v1h-1zM18 406h1v1h-1zM10 402h1v1h-1zM2 395h1v1h-1zM480 393h1v1h-1zM482 391h1v1h-1zM482 387h1v1h-1zM482 383h1v1h-1zM479 380h1v1h-1zM477 376h1v1h-1zM476 375h1v1h-1zM472 376h1v1h-1zM468 377h1v1h-1zM464 377h1v1h-1zM462 381h1v1h-1zM462 383h1v1h-1zM462 389h1v1h-1zM461 390h1v1h-1zM464 392h1v1h-1zM465 394h1v1h-1zM469 396h1v1h-1zM473 394h1v1h-1zM475 393h1v1h-1zM479 388h1v1h-1zM476 385h1v1h-1zM477 383h1v1h-1zM476 378h1v1h-1zM475 378h1v1h-1zM472 378h1v1h-1zM465 379h1v1h-1zM463 381h1v1h-1zM461 382h1v1h-1zM458 385h1v1h-1zM460 390h1v1h-1zM458 392h1v1h-1zM461 396h1v1h-1zM464 399h1v1h-1zM468 398h1v1h-1zM471 397h1v1h-1zM475 398h1v1h-1zM486 401h1v1h-1zM486 398h1v1h-1zM492 392h1v1h-1zM491 388h1v1h-1zM489 385h1v1h-1zM489 380h1v1h-1zM486 377h1v1h-1zM481 375h1v1h-1zM476 376h1v1h-1zM473 377h1v1h-1zM470 379h1v1h-1zM465 381h1v1h-1zM462 385h1v1h-1zM462 391h1v1h-1zM462 395h1v1h-1zM463 396h1v1h-1zM465 401h1v1h-1zM468 402h1v1h-1zM472 404h1v1h-1zM476 403h1v1h-1zM480 402h1v1h-1zM483 399h1v1h-1zM487 394h1v1h-1zM486 391h1v1h-1zM485 387h1v1h-1zM484 383h1v1h-1zM484 381h1v1h-1zM479 379h1v1h-1zM475 377h1v1h-1zM471 380h1v1h-1zM468 380h1v1h-1zM465 383h1v1h-1zM462 387h1v1h-1zM459 392h1v1h-1zM459 396h1v1h-1zM460 399h1v1h-1zM465 404h1v1h-1zM465 407h1v1h-1zM469 408h1v1h-1zM474 407h1v1h-1zM477 408h1v1h-1zM483 406h1v1h-1zM495 411h1v1h-1zM499 407h1v1h-1zM501 399h1v1h-1zM499 393h1v1h-1zM501 387h1v1h-1zM499 386h1v1h-1zM494 381h1v1h-1zM492 379h1v1h-1zM488 378h1v1h-1zM484 374h1v1h-1zM479 378h1v1h-1zM475 379h1v1h-1zM470 384h1v1h-1zM468 388h1v1h-1zM464 393h1v1h-1zM464 395h1v1h-1zM463 400h1v1h-1zM465 406h1v1h-1zM469 409h1v1h-1zM471 410h1v1h-1zM476 412h1v1h-1zM479 411h1v1h-1zM483 412h1v1h-1zM488 407h1v1h-1zM490 405h1v1h-1zM494 403h1v1h-1zM495 398h1v1h-1zM495 394h1v1h-1zM495 390h1v1h-1zM492 387h1v1h-1zM490 381h1v1h-1zM485 383h1v1h-1zM483 381h1v1h-1zM473 382h1v1h-1zM468 383h1v1h-1zM466 390h1v1h-1zM461 399h1v1h-1zM461 402h1v1h-1zM463 409h1v1h-1zM463 411h1v1h-1zM467 416h1v1h-1zM470 418h1v1h-1zM476 417h1v1h-1zM481 417h1v1h-1zM486 416h1v1h-1zM490 414h1v1h-1zM506 418h1v1h-1zM509 412h1v1h-1zM511 408h1v1h-1zM513 401h1v1h-1zM514 396h1v1h-1zM512 391h1v1h-1zM508 386h1v1h-1zM506 383h1v1h-1zM502 377h1v1h-1zM496 379h1v1h-1zM489 377h1v1h-1zM488 380h1v1h-1zM482 380h1v1h-1zM476 383h1v1h-1zM472 388h1v1h-1zM469 394h1v1h-1zM465 398h1v1h-1zM466 404h1v1h-1zM466 410h1v1h-1zM465 414h1v1h-1zM469 416h1v1h-1zM473 421h1v1h-1zM478 420h1v1h-1zM482 422h1v1h-1zM487 423h1v1h-1zM493 421h1v1h-1zM497 419h1v1h-1zM501 413h1v1h-1zM502 411h1v1h-1zM505 405h1v1h-1zM507 400h1v1h-1zM506 393h1v1h-1zM505 389h1v1h-1zM502 387h1v1h-1zM499 384h1v1h-1zM496 381h1v1h-1zM493 380h1v1h-1zM484 380h1v1h-1zM480 383h1v1h-1zM475 385h1v1h-1zM469 389h1v1h-1zM468 394h1v1h-1zM465 400h1v1h-1zM463 404h1v1h-1zM464 414h1v1h-1zM466 421h1v1h-1zM469 424h1v1h-1zM475 426h1v1h-1zM479 429h1v1h-1zM485 429h1v1h-1zM490 427h1v1h-1zM495 426h1v1h-1zM499 423h1v1h-1zM516 430h1v1h-1zM520 423h1v1h-1zM523 418h1v1h-1zM525 412h1v1h-1zM525 404h1v1h-1zM525 398h1v1h-1zM522 392h1v1h-1zM521 386h1v1h-1zM516 382h1v1h-1zM511 379h1v1h-1zM506 379h1v1h-1zM502 378h1v1h-1zM488 382h1v1h-1zM482 384h1v1h-1zM478 389h1v1h-1zM474 394h1v1h-1zM470 399h1v1h-1zM469 402h1v1h-1zM466 412h1v1h-1zM471 423h1v1h-1zM473 424h1v1h-1zM475 428h1v1h-1zM483 434h1v1h-1zM487 434h1v1h-1zM489 432h1v1h-1zM494 435h1v1h-1zM502 432h1v1h-1zM507 428h1v1h-1zM509 425h1v1h-1zM514 419h1v1h-1zM516 413h1v1h-1zM520 407h1v1h-1zM519 402h1v1h-1zM519 397h1v1h-1zM515 393h1v1h-1zM513 387h1v1h-1zM510 384h1v1h-1zM503 383h1v1h-1zM500 381h1v1h-1zM492 382h1v1h-1zM487 385h1v1h-1zM482 388h1v1h-1zM475 389h1v1h-1zM473 393h1v1h-1zM470 400h1v1h-1zM465 405h1v1h-1zM463 413h1v1h-1zM465 421h1v1h-1zM464 424h1v1h-1zM468 429h1v1h-1zM471 435h1v1h-1zM477 437h1v1h-1zM483 439h1v1h-1zM487 441h1v1h-1zM492 442h1v1h-1zM500 439h1v1h-1zM506 437h1v1h-1zM512 432h1v1h-1zM529 442h1v1h-1zM533 432h1v1h-1zM538 427h1v1h-1zM539 421h1v1h-1zM540 412h1v1h-1zM539 405h1v1h-1zM539 402h1v1h-1zM538 393h1v1h-1zM533 390h1v1h-1zM527 384h1v1h-1zM522 381h1v1h-1zM516 380h1v1h-1zM510 380h1v1h-1zM503 380h1v1h-1zM496 382h1v1h-1zM491 384h1v1h-1zM485 388h1v1h-1zM481 394h1v1h-1zM475 402h1v1h-1zM474 408h1v1h-1zM470 412h1v1h-1zM469 421h1v1h-1zM469 425h1v1h-1zM471 432h1v1h-1zM474 436h1v1h-1zM478 440h1v1h-1zM483 445h1v1h-1zM491 446h1v1h-1zM494 446h1v1h-1zM501 448h1v1h-1zM505 445h1v1h-1zM512 443h1v1h-1zM519 439h1v1h-1zM522 436h1v1h-1zM527 428h1v1h-1zM529 424h1v1h-1zM533 415h1v1h-1zM531 410h1v1h-1zM531 405h1v1h-1zM530 399h1v1h-1zM527 393h1v1h-1zM523 390h1v1h-1zM520 386h1v1h-1zM515 384h1v1h-1zM507 382h1v1h-1zM501 384h1v1h-1zM495 385h1v1h-1zM489 387h1v1h-1zM477 396h1v1h-1zM474 401h1v1h-1zM471 408h1v1h-1zM467 413h1v1h-1zM467 428h1v1h-1zM468 433h1v1h-1zM469 439h1v1h-1zM473 445h1v1h-1zM478 448h1v1h-1zM524 448h1v1h-1zM545 389h1v1h-1zM541 386h1v1h-1zM533 382h1v1h-1zM527 382h1v1h-1zM522 382h1v1h-1zM513 381h1v1h-1zM505 383h1v1h-1zM498 386h1v1h-1zM490 392h1v1h-1zM487 396h1v1h-1zM476 407h1v1h-1zM475 415h1v1h-1zM473 422h1v1h-1zM474 429h1v1h-1zM473 434h1v1h-1zM475 444h1v1h-1zM478 447h1v1h-1zM534 446h1v1h-1zM539 443h1v1h-1zM543 434h1v1h-1zM544 402h1v1h-1zM542 397h1v1h-1zM535 392h1v1h-1zM532 388h1v1h-1zM524 387h1v1h-1zM519 382h1v1h-1zM513 383h1v1h-1zM506 386h1v1h-1zM499 390h1v1h-1zM490 394h1v1h-1zM484 397h1v1h-1zM480 404h1v1h-1zM477 411h1v1h-1zM473 417h1v1h-1zM470 424h1v1h-1zM470 432h1v1h-1zM467 440h1v1h-1zM471 446h1v1h-1zM545 384h1v1h-1zM540 383h1v1h-1zM533 381h1v1h-1zM524 383h1v1h-1zM518 385h1v1h-1zM509 386h1v1h-1zM500 391h1v1h-1zM496 396h1v1h-1zM490 403h1v1h-1zM486 410h1v1h-1zM479 417h1v1h-1zM479 423h1v1h-1zM477 432h1v1h-1zM475 441h1v1h-1zM477 447h1v1h-1zM544 390h1v1h-1zM539 388h1v1h-1zM531 386h1v1h-1zM522 387h1v1h-1zM515 387h1v1h-1zM508 390h1v1h-1zM500 395h1v1h-1zM493 398h1v1h-1zM487 402h1v1h-1zM484 411h1v1h-1zM478 417h1v1h-1zM474 426h1v1h-1zM472 433h1v1h-1zM471 441h1v1h-1zM542 383h1v1h-1zM538 383h1v1h-1zM528 384h1v1h-1zM520 388h1v1h-1zM510 392h1v1h-1zM504 398h1v1h-1zM497 404h1v1h-1zM491 409h1v1h-1zM487 417h1v1h-1zM483 425h1v1h-1zM482 435h1v1h-1zM479 442h1v1h-1zM543 388h1v1h-1zM533 387h1v1h-1zM526 389h1v1h-1zM518 392h1v1h-1zM511 395h1v1h-1zM503 400h1v1h-1zM495 407h1v1h-1zM491 413h1v1h-1zM484 421h1v1h-1zM481 428h1v1h-1zM476 435h1v1h-1zM475 445h1v1h-1zM538 386h1v1h-1zM533 388h1v1h-1zM521 394h1v1h-1zM515 400h1v1h-1zM506 406h1v1h-1zM500 411h1v1h-1zM495 420h1v1h-1zM489 428h1v1h-1zM486 436h1v1h-1zM483 447h1v1h-1zM539 389h1v1h-1zM530 394h1v1h-1zM522 397h1v1h-1zM512 402h1v1h-1zM508 407h1v1h-1zM500 414h1v1h-1zM487 429h1v1h-1zM482 439h1v1h-1zM480 447h1v1h-1zM543 390h1v1h-1zM535 394h1v1h-1zM526 400h1v1h-1zM518 406h1v1h-1zM511 413h1v1h-1zM502 421h1v1h-1zM499 430h1v1h-1zM494 438h1v1h-1zM489 447h1v1h-1zM542 394h1v1h-1zM532 398h1v1h-1zM526 402h1v1h-1zM516 409h1v1h-1zM507 416h1v1h-1zM501 425h1v1h-1zM494 434h1v1h-1zM488 443h1v1h-1zM538 403h1v1h-1zM527 407h1v1h-1zM520 414h1v1h-1zM514 425h1v1h-1zM507 433h1v1h-1zM499 442h1v1h-1zM544 401h1v1h-1zM537 405h1v1h-1zM528 410h1v1h-1zM518 417h1v1h-1zM511 426h1v1h-1zM503 435h1v1h-1zM498 443h1v1h-1zM274 225h1v1h-1z"/><rect x="0" y="0" width="1" height="450" fill="#000"/><rect x="182" y="0" width="1" height="450" fill="#000"/><rect x="364" y="0" width="1" height="450" fill="#000"/><rect x="546" y="0" width="1" height="450" fill="#000"/><rect x="0" y="0" width="547" height="1" fill="#000"/><rect x="0" y="150" width="547" height="1" fill="#000"/><rect x="0" y="299" width="547" height="1" fill="#000"/><rect x="0" y="449" width="547" height="1" fill="#000"/><path fill="#000" d="M91 70h1v1h-1zM92 70h1v1h-1zM88 71h1v1h-1zM89 71h1v1h-1zM90 71h1v1h-1zM93 71h1v1h-1zM94 71h1v1h-1zM95 71h1v1h-1zM87 72h1v1h-1zM96 72h1v1h-1zM87 73h1v1h-1zM96 73h1v1h-1zM87 74h1v1h-1zM96 74h1v1h-1zM86 75h1v1h-1zM97 75h1v1h-1zM86 76h1v1h-1zM97 76h1v1h-1zM87 77h1v1h-1zM96 77h1v1h-1zM87 78h1v1h-1zM96 78h1v1h-1zM87 79h1v1h-1zM96 79h1v1h-1zM88 80h1v1h-1zM89 80h1v1h-1zM90 80h1v1h-1zM93 80h1v1h-1zM94 80h1v1h-1zM95 80h1v1h-1zM91 81h1v1h-1zM92 81h1v1h-1zM273 70h1v1h-1zM274 70h1v1h-1zM270 71h1v1h-1zM271 71h1v1h-1zM272 71h1v1h-1zM275 71h1v1h-1zM276 71h1v1h-1zM277 71h1v1h-1zM269 72h1v1h-1zM278 72h1v1h-1zM269 73h1v1h-1zM278 73h1v1h-1zM269 74h1v1h-1zM278 74h1v1h-1zM268 75h1v1h-1zM279 75h1v1h-1zM268 76h1v1h-1zM279 76h1v1h-1zM269 77h1v1h-1zM278 77h1v1h-1zM269 78h1v1h-1zM278 78h1v1h-1zM269 79h1v1h-1zM278 79h1v1h-1zM270 80h1v1h-1zM271 80h1v1h-1zM272 80h1v1h-1zM275 80h1v1h-1zM276 80h1v1h-1zM277 80h1v1h-1zM273 81h1v1h-1zM274 81h1v1h-1zM455 70h1v1h-1zM456 70h1v1h-1zM452 71h1v1h-1zM453 71h1v1h-1zM454 71h1v1h-1zM457 71h1v1h-1zM458 71h1v1h-1zM459 71h1v1h-1zM451 72h1v1h-1zM460 72h1v1h-1zM451 73h1v1h-1zM460 73h1v1h-1zM451 74h1v1h-1zM460 74h1v1h-1zM450 75h1v1h-1zM461 75h1v1h-1zM450 76h1v1h-1zM461 76h1v1h-1zM451 77h1v1h-1zM460 77h1v1h-1zM451 78h1v1h-1zM460 78h1v1h-1zM451 79h1v1h-1zM460 79h1v1h-1zM452 80h1v1h-1zM453 80h1v1h-1zM454 80h1v1h-1zM457 80h1v1h-1zM458 80h1v1h-1zM459 80h1v1h-1zM455 81h1v1h-1zM456 81h1v1h-1zM91 220h1v1h-1zM92 220h1v1h-1zM88 221h1v1h-1zM89 221h1v1h-1zM90 221h1v1h-1zM93 221h1v1h-1zM94 221h1v1h-1zM95 221h1v1h-1zM87 222h1v1h-1zM96 222h1v1h-1zM87 223h1v1h-1zM96 223h1v1h-1zM87 224h1v1h-1zM96 224h1v1h-1zM86 225h1v1h-1zM97 225h1v1h-1zM86 226h1v1h-1zM97 226h1v1h-1zM87 227h1v1h-1zM96 227h1v1h-1zM87 228h1v1h-1zM96 228h1v1h-1zM87 229h1v1h-1zM96 229h1v1h-1zM88 230h1v1h-1zM89 230h1v1h-1zM90 230h1v1h-1zM93 230h1v1h-1zM94 230h1v1h-1zM95 230h1v1h-1zM91 231h1v1h-1zM92 231h1v1h-1zM273 220h1v1h-1zM274 220h1v1h-1zM270 221h1v1h-1zM271 221h1v1h-1zM272 221h1v1h-1zM275 221h1v1h-1zM276 221h1v1h-1zM277 221h1v1h-1zM269 222h1v1h-1zM278 222h1v1h-1zM269 223h1v1h-1zM278 223h1v1h-1zM269 224h1v1h-1zM278 224h1v1h-1zM268 225h1v1h-1zM279 225h1v1h-1zM268 226h1v1h-1zM279 226h1v1h-1zM269 227h1v1h-1zM278 227h1v1h-1zM269 228h1v1h-1zM278 228h1v1h-1zM269 229h1v1h-1zM278 229h1v1h-1zM270 230h1v1h-1zM271 230h1v1h-1zM272 230h1v1h-1zM275 230h1v1h-1zM276 230h1v1h-1zM277 230h1v1h-1zM273 231h1v1h-1zM274 231h1v1h-1zM455 220h1v1h-1zM456 220h1v1h-1zM452 221h1v1h-1zM453 221h1v1h-1zM454 221h1v1h-1zM457 221h1v1h-1zM458 221h1v1h-1zM459 221h1v1h-1zM451 222h1v1h-1zM460 222h1v1h-1zM451 223h1v1h-1zM460 223h1v1h-1zM451 224h1v1h-1zM460 224h1v1h-1zM450 225h1v1h-1zM461 225h1v1h-1zM450 226h1v1h-1zM461 226h1v1h-1zM451 227h1v1h-1zM460 227h1v1h-1zM451 228h1v1h-1zM460 228h1v1h-1zM451 229h1v1h-1zM460 229h1v1h-1zM452 230h1v1h-1zM453 230h1v1h-1zM454 230h1v1h-1zM457 230h1v1h-1zM458 230h1v1h-1zM459 230h1v1h-1zM455 231h1v1h-1zM456 231h1v1h-1zM91 369h1v1h-1zM92 369h1v1h-1zM88 370h1v1h-1zM89 370h1v1h-1zM90 370h1v1h-1zM93 370h1v1h-1zM94 370h1v1h-1zM95 370h1v1h-1zM87 371h1v1h-1zM96 371h1v1h-1zM87 372h1v1h-1zM96 372h1v1h-1zM87 373h1v1h-1zM96 373h1v1h-1zM86 374h1v1h-1zM97 374h1v1h-1zM86 375h1v1h-1zM97 375h1v1h-1zM87 376h1v1h-1zM96 376h1v1h-1zM87 377h1v1h-1zM96 377h1v1h-1zM87 378h1v1h-1zM96 378h1v1h-1zM88 379h1v1h-1zM89 379h1v1h-1zM90 379h1v1h-1zM93 379h1v1h-1zM94 379h1v1h-1zM95 379h1v1h-1zM91 380h1v1h-1zM92 380h1v1h-1zM273 369h1v1h-1zM274 369h1v1h-1zM270 370h1v1h-1zM271 370h1v1h-1zM272 370h1v1h-1zM275 370h1v1h-1zM276 370h1v1h-1zM277 370h1v1h-1zM269 371h1v1h-1zM278 371h1v1h-1zM269 372h1v1h-1zM278 372h1v1h-1zM269 373h1v1h-1zM278 373h1v1h-1zM268 374h1v1h-1zM279 374h1v1h-1zM268 375h1v1h-1zM279 375h1v1h-1zM269 376h1v1h-1zM278 376h1v1h-1zM269 377h1v1h-1zM278 377h1v1h-1zM269 378h1v1h-1zM278 378h1v1h-1zM270 379h1v1h-1zM271 379h1v1h-1zM272 379h1v1h-1zM275 379h1v1h-1zM276 379h1v1h-1zM277 379h1v1h-1zM273 380h1v1h-1zM274 380h1v1h-1zM455 369h1v1h-1zM456 369h1v1h-1zM452 370h1v1h-1zM453 370h1v1h-1zM454 370h1v1h-1zM457 370h1v1h-1zM458 370h1v1h-1zM459 370h1v1h-1zM451 371h1v1h-1zM460 371h1v1h-1zM451 372h1v1h-1zM460 372h1v1h-1zM451 373h1v1h-1zM460 373h1v1h-1zM450 374h1v1h-1zM461 374h1v1h-1zM450 375h1v1h-1zM461 375h1v1h-1zM451 376h1v1h-1zM460 376h1v1h-1zM451 377h1v1h-1zM460 377h1v1h-1zM451 378h1v1h-1zM460 378h1v1h-1zM452 379h1v1h-1zM453 379h1v1h-1zM454 379h1v1h-1zM457 379h1v1h-1zM458 379h1v1h-1zM459 379h1v1h-1zM455 380h1v1h-1zM456 380h1v1h-1z"/><rect x="189" y="186" width="2" height="76" fill="#000"/></svg>
<div class="t" style="left:151px;top:106.27px;font-size:11.5px;transform:scaleX(.925);transform-origin:left">Xfield  -0,500  Yfield  0,500</div>
<div class="t" style="left:333px;top:106.27px;font-size:11.5px;transform:scaleX(.925);transform-origin:left">Xfield  0,000  Yfield  0,500</div>
<div class="t" style="left:515px;top:106.27px;font-size:11.5px;transform:scaleX(.925);transform-origin:left">Xfield  0,500  Yfield  0,500</div>
<div class="t" style="left:151px;top:256.27px;font-size:11.5px;transform:scaleX(.925);transform-origin:left">Xfield  -0,500  Yfield  0,000</div>
<div class="t" style="left:333px;top:256.27px;font-size:11.5px;transform:scaleX(.925);transform-origin:left">Xfield  0,0  Yfield  0,0</div>
<div class="t" style="left:515px;top:256.27px;font-size:11.5px;transform:scaleX(.925);transform-origin:left">Xfield  0,500  Yfield  0,000</div>
<div class="t" style="left:151px;top:541.27px;font-size:11.5px;transform:scaleX(.925);transform-origin:left">Xfield  -0,500  Yfield  -0,500</div>
<div class="t" style="left:333px;top:541.27px;font-size:11.5px;transform:scaleX(.925);transform-origin:left">Xfield  0,000  Yfield  -0,500</div>
<div class="t" style="left:515px;top:541.27px;font-size:11.5px;transform:scaleX(.925);transform-origin:left">Xfield  0,500  Yfield  -0,500</div>
<div class="t" style="left:334px;top:367.07px;font-size:11.5px;transform:scaleX(.925);transform-origin:left">0,048</div>
<div class="a" style="left:700px;top:266px;width:90px;height:65px;background:#FF0000"></div>
<div class="a" style="left:703px;top:270px;width:83px;height:56px;background:#D8D0D2;border-top:1px solid #fff;border-left:1px solid #fff;border-right:1px solid #404040;border-bottom:1px solid #404040;box-shadow:inset -1px -1px 0 #877F84"></div>
<div class="t" style="left:644.0px;width:200px;text-align:center;top:281.43px;font-size:14.5px;color:#1a1a1a;">UPDATE</div>
<div class="t" style="left:644.0px;width:200px;text-align:center;top:298.33px;font-size:14.5px;color:#1a1a1a;">SPOT</div>
<div class="a" style="left:698px;top:334px;width:90px;height:35px;background:#FF9090"></div>
<div class="a" style="left:701px;top:337px;width:84px;height:29px;background:#D8D0D2"></div>
<div class="a" style="left:703px;top:340px;width:83px;height:25px;background:#D8D0D2;border:1px solid #000"></div>
<div class="a" style="left:704px;top:341px;width:81px;height:23px;border-top:1px solid #fff;border-left:1px solid #fff;border-right:1px solid #404040;border-bottom:1px solid #404040;box-shadow:inset -1px -1px 0 #877F84"></div>
<div class="a" style="left:707px;top:344px;width:76px;height:18px;border:1px dotted #000"></div>
<div class="t" style="left:644.0px;width:200px;text-align:center;top:345.61px;font-size:11.8px;color:#1a1a1a;">AutoFocus</div>
</body></html>
